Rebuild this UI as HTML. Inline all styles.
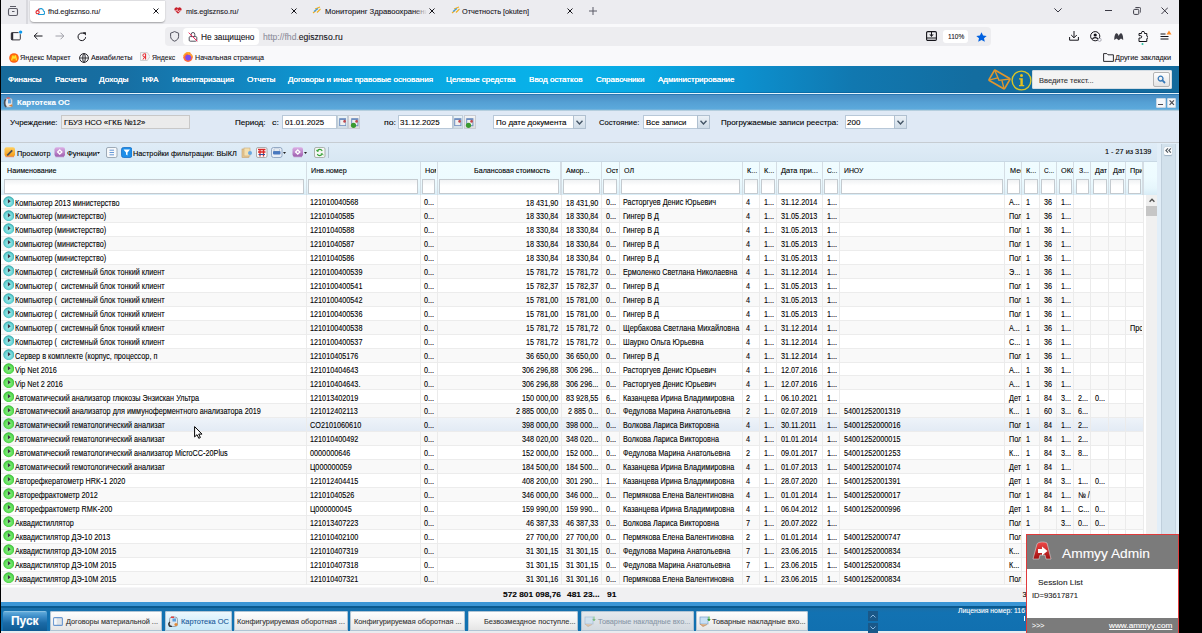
<!DOCTYPE html><html><head><meta charset="utf-8"><style>
*{box-sizing:border-box}
html,body{margin:0;padding:0}
body{width:1202px;height:633px;overflow:hidden;position:relative;background:#fff;font-family:"Liberation Sans", sans-serif;color:#000}
.a{position:absolute}
.t{position:absolute;white-space:nowrap;line-height:1}
.t{-webkit-text-stroke:0.1px currentColor}

</style></head><body>
<div class="a" style="left:0px;top:0px;width:1202px;height:24px;background:#ececf0"></div>
<div class="a" style="left:0px;top:24px;width:1202px;height:42px;background:#f9f9fb"></div>
<div class="a" style="left:29.7px;top:0.5px;width:135.5px;height:21px;background:#fff;border-radius:0 0 4px 4px;box-shadow:0 0.5px 1.5px rgba(0,0,0,.3)"></div>
<div class="a" style="left:26px;top:0px;width:1.5px;height:24px;background:#d9d9de"></div>
<svg class="a" style="left:7px;top:5px" width="12" height="12" viewBox="0 0 12 12"><path d="M3 1.5H9" stroke="#5b5b66" stroke-width="1"/><rect x="1.5" y="3.5" width="9" height="7" rx="1.5" stroke="#5b5b66" stroke-width="1.1" fill="none"/><rect x="5" y="6" width="2.5" height="1" fill="#5b5b66"/></svg>
<svg class="a" style="left:34.5px;top:6.5px" width="10" height="8" viewBox="0 0 10 8"><path d="M3 7.5H8.2A1.8 1.8 0 0 0 8.5 4A2.6 2.6 0 0 0 3.6 3" stroke="#1a9ad6" stroke-width="1.1" fill="none"/><circle cx="2.6" cy="5.2" r="1.6" stroke="#e0242a" stroke-width="1.1" fill="none"/><path d="M2.6 3.6L4 1.5" stroke="#e0242a" stroke-width="1"/></svg>
<svg class="a" style="left:174px;top:6.5px" width="8" height="7" viewBox="0 0 8 7"><path d="M4 6.8L0.8 3.5A1.8 1.8 0 0 1 4 1.3A1.8 1.8 0 0 1 7.2 3.5Z" fill="#c8202c"/><path d="M1 3.8H2.6L3.3 2.5L4.3 5L5 3.8H7" stroke="#fff" stroke-width=".6" fill="none"/></svg>
<svg class="a" style="left:311.5px;top:6px" width="9" height="8" viewBox="0 0 9 8"><path d="M1 7L4 4.5M3 3L8 1M5 6.5L8.5 3" stroke="#f0b020" stroke-width="1.1"/><path d="M2 5.5L6 2.5" stroke="#3a9ae0" stroke-width="1.1"/></svg>
<svg class="a" style="left:450.5px;top:6px" width="9" height="8" viewBox="0 0 9 8"><path d="M1 7L4 4.5M3 3L8 1M5 6.5L8.5 3" stroke="#f0b020" stroke-width="1.1"/><path d="M2 5.5L6 2.5" stroke="#3a9ae0" stroke-width="1.1"/></svg>
<div class="t" style="left:47.90px;top:7.50px;font-size:8px;color:#15141a;transform:scaleX(0.9261);transform-origin:0 0;">fhd.egisznso.ru/</div>
<div class="t" style="left:186.20px;top:7.50px;font-size:8px;color:#15141a;transform:scaleX(0.9067);transform-origin:0 0;">mis.egisznso.ru/</div>
<div class="a" style="left:324.5px;top:0;width:102px;height:22px;overflow:hidden">
<div class="t" style="left:0.00px;top:7.50px;font-size:8px;color:#15141a;transform:scaleX(0.9563);transform-origin:0 0;">Мониторинг Здравоохранения</div>
</div>
<div class="a" style="left:414px;top:3px;width:13px;height:16px;background:linear-gradient(90deg,rgba(236,236,240,0),#ececf0)"></div>
<div class="t" style="left:462.00px;top:7.50px;font-size:8px;color:#15141a;transform:scaleX(0.9143);transform-origin:0 0;">Отчетность [okuten]</div>
<svg class="a" style="left:152.5px;top:8px" width="6" height="6" viewBox="0 0 6 6"><path d="M0.5 0.5L5.5 5.5M5.5 0.5L0.5 5.5" stroke="#15141a" stroke-width="1"/></svg>
<svg class="a" style="left:290.5px;top:8px" width="6" height="6" viewBox="0 0 6 6"><path d="M0.5 0.5L5.5 5.5M5.5 0.5L0.5 5.5" stroke="#15141a" stroke-width="1"/></svg>
<svg class="a" style="left:428.5px;top:8px" width="6" height="6" viewBox="0 0 6 6"><path d="M0.5 0.5L5.5 5.5M5.5 0.5L0.5 5.5" stroke="#15141a" stroke-width="1"/></svg>
<svg class="a" style="left:566.7px;top:8px" width="6" height="6" viewBox="0 0 6 6"><path d="M0.5 0.5L5.5 5.5M5.5 0.5L0.5 5.5" stroke="#15141a" stroke-width="1"/></svg>
<svg class="a" style="left:589px;top:7px" width="8" height="8" viewBox="0 0 8 8"><path d="M4 0V8M0 4H8" stroke="#5b5b66" stroke-width="1"/></svg>
<svg class="a" style="left:1053.5px;top:8px" width="8" height="4.5" viewBox="0 0 8 4.5"><path d="M0.4 0.4L4 4L7.6 0.4" stroke="#3a3944" stroke-width="1" fill="none"/></svg>
<div class="a" style="left:1104.6px;top:10px;width:7px;height:1px;background:#3a3944"></div>
<svg class="a" style="left:1132.6px;top:6.6px" width="8.5" height="8" viewBox="0 0 8.5 8"><rect x="0.6" y="2.4" width="5.2" height="5" rx="1" stroke="#3a3944" stroke-width="1" fill="none"/><path d="M2.4 0.6H6.6A1.2 1.2 0 0 1 7.8 1.8V5.6" stroke="#3a3944" stroke-width="1" fill="none"/></svg>
<svg class="a" style="left:1160.8px;top:6.8px" width="7.5" height="7.5" viewBox="0 0 7.5 7.5"><path d="M0.5 0.5L7 7M7 0.5L0.5 7" stroke="#3a3944" stroke-width="1"/></svg>
<svg class="a" style="left:10px;top:30px" width="13" height="11" viewBox="0 0 13 11"><rect x="1.3" y="2.6" width="9" height="7.3" rx="1" stroke="#2b2a33" stroke-width=".95" fill="none"/><rect x="1.3" y="2.6" width="1.9" height="7.3" fill="#2b2a33"/><circle cx="10.6" cy="2.1" r="2.2" fill="#f9f9fb"/><circle cx="10.6" cy="2.1" r="1.7" fill="#0a9af0"/></svg>
<svg class="a" style="left:33px;top:32px" width="10" height="8" viewBox="0 0 10 8"><path d="M9.5 4H1.2M4.5 0.7L1.2 4L4.5 7.3" stroke="#15141a" stroke-width="1" fill="none"/></svg>
<svg class="a" style="left:55px;top:32px" width="10" height="8" viewBox="0 0 10 8"><path d="M0.5 4H8.8M5.5 0.7L8.8 4L5.5 7.3" stroke="#a0a0a8" stroke-width="1" fill="none"/></svg>
<svg class="a" style="left:77px;top:31.5px" width="10" height="10" viewBox="0 0 10 10"><path d="M8.6 5.2A3.8 3.8 0 1 1 6.8 1.6" stroke="#15141a" stroke-width="1" fill="none"/><path d="M5.6 0.3H8.9V3.6Z" fill="#15141a"/></svg>
<div class="a" style="left:165.2px;top:26.7px;width:825.4px;height:19px;background:#ededf0;border-radius:4px"></div>
<svg class="a" style="left:169.5px;top:30.5px" width="10" height="11" viewBox="0 0 10 11"><path d="M4.6 0.6L8.6 2.2V5.4C8.6 7.8 6.8 9.4 4.6 10.2C2.4 9.4 0.6 7.8 0.6 5.4V2.2Z" stroke="#4a4a55" stroke-width=".95" fill="none" stroke-linejoin="round"/></svg>
<div class="a" style="left:183.3px;top:28px;width:75.4px;height:17px;background:#fff;border-radius:4px"></div>
<svg class="a" style="left:188px;top:30.5px" width="10" height="11" viewBox="0 0 10 11"><path d="M3.2 5.6V3.3A1.8 1.8 0 0 1 6.8 3.3V5.6" stroke="#4a4a55" stroke-width=".95" fill="none"/><rect x="1.2" y="5.6" width="7.6" height="4.6" rx="1" stroke="#4a4a55" stroke-width=".95" fill="none"/><path d="M0.7 1.6L9.3 10.3" stroke="#f0245a" stroke-width="1"/></svg>
<div class="t" style="left:200.50px;top:32.65px;font-size:8.3px;color:#15141a;transform:scaleX(1.0028);transform-origin:0 0;">Не защищено</div>
<div class="t" style="left:263.3px;top:32.77px;font-size:8.3px;color:#8f8f9d;transform:scaleX(1.0345);transform-origin:0 0">http://fhd.<span style="color:#15141a">egisznso.ru</span></div>
<svg class="a" style="left:926px;top:31px" width="11" height="10" viewBox="0 0 11 10"><rect x="0.6" y="0.6" width="9.8" height="8.8" rx="1.2" stroke="#15141a" stroke-width="1.1" fill="none"/><path d="M5.5 0V5.5" stroke="#15141a" stroke-width="1"/><path d="M3.2 3.6H7.8L5.5 5.8Z" fill="#15141a"/><path d="M0.6 7H10.4" stroke="#15141a" stroke-width="1"/></svg>
<div class="a" style="left:943px;top:30px;width:25.3px;height:13px;background:#fff;border-radius:3px"></div>
<div class="t" style="left:948.00px;top:33.30px;font-size:7.8px;color:#15141a;transform:scaleX(0.8364);transform-origin:0 0;">110%</div>
<svg class="a" style="left:975.5px;top:31.5px" width="11" height="10" viewBox="0 0 11 10"><path d="M5.5 0.2L7.1 3.5L10.7 3.9L8 6.3L8.8 9.8L5.5 8L2.2 9.8L3 6.3L0.3 3.9L3.9 3.5Z" fill="#0061e0"/></svg>
<svg class="a" style="left:1068.5px;top:31px" width="10" height="10" viewBox="0 0 10 10"><path d="M5 0V6.5M2.2 4L5 6.8L7.8 4M0.6 6V9.2H9.4V6" stroke="#15141a" stroke-width="1" fill="none"/></svg>
<svg class="a" style="left:1090px;top:31px" width="12" height="11" viewBox="0 0 12 11"><circle cx="5.2" cy="5.2" r="4.6" stroke="#15141a" stroke-width="1" fill="none"/><circle cx="5.2" cy="4" r="1.6" fill="#15141a"/><path d="M2.6 8C3.2 6.2 7.2 6.2 7.8 8" stroke="#15141a" stroke-width="1.3" fill="none"/><circle cx="9.6" cy="8.8" r="1.6" fill="#f9f9fb" stroke="#8f8f9d" stroke-width=".7"/></svg>
<svg class="a" style="left:1114px;top:33px" width="9.5" height="7.5" viewBox="0 0 9.5 7.5"><path d="M0.3 7C0.3 2 1.5 0.3 2.8 0.3C3.8 0.3 4.75 3 4.75 3C4.75 3 5.7 0.3 6.7 0.3C8 0.3 9.2 2 9.2 7L7 5.6L4.75 7.3L2.5 5.6Z" fill="#3d3d45"/></svg>
<svg class="a" style="left:1137.5px;top:30.5px" width="10" height="14" viewBox="0 0 10 14"><path d="M1 10.5V7H2.5A1.2 1.2 0 0 0 2.5 4.6H1V2.5H3.5V1.8A1.5 1.5 0 0 1 6.5 1.8V2.5H8.8V5.2A1.2 1.2 0 0 1 8.8 7.6V10.5Z" stroke="#15141a" stroke-width="1" fill="none"/><circle cx="4.5" cy="13" r="1" fill="#2ac3a2"/></svg>
<svg class="a" style="left:1159.5px;top:29.5px" width="12" height="11" viewBox="0 0 12 11"><path d="M0.5 4H5.5M0.5 6.5H8.5M0.5 9H8.5" stroke="#15141a" stroke-width="1" fill="none"/><path d="M6.5 4.5L9 0.5L11.5 4.5Z" fill="#ff8a24"/></svg>
<svg class="a" style="left:9px;top:52.5px" width="10" height="10" viewBox="0 0 10 10"><circle cx="5" cy="5" r="4.8" fill="#ff5a10"/><circle cx="5" cy="5" r="3.5" fill="#ffa000" opacity=".6"/><path d="M2.6 7.4L4 3L5 5.5L6.3 2.8L7.6 7.4" stroke="#ffe030" stroke-width="1.3" fill="none" stroke-linejoin="round"/></svg>
<div class="t" style="left:20.40px;top:53.50px;font-size:8px;color:#15141a;transform:scaleX(0.9002);transform-origin:0 0;">Яндекс Маркет</div>
<svg class="a" style="left:79px;top:52.5px" width="10" height="10" viewBox="0 0 10 10"><circle cx="5" cy="5" r="4.4" stroke="#15141a" stroke-width=".9" fill="none"/><path d="M0.6 5H9.4M5 0.6V9.4M5 0.6C2.8 2.5 2.8 7.5 5 9.4M5 0.6C7.2 2.5 7.2 7.5 5 9.4" stroke="#15141a" stroke-width=".7" fill="none"/></svg>
<div class="t" style="left:90.80px;top:53.50px;font-size:8px;color:#15141a;transform:scaleX(0.9035);transform-origin:0 0;">Авиабилеты</div>
<svg class="a" style="left:139.5px;top:52px" width="10.5" height="9" viewBox="0 0 10.5 9"><path d="M0.5 0.5H7.3L10 4.5L7.3 8.5H0.5Z" fill="#f4f4f4" stroke="#c8c8c8" stroke-width=".8"/><path d="M5.6 1.8V7.5M5.6 1.8H4.4A1.5 1.5 0 0 0 4.4 4.8H5.6M4.8 4.8L3 7.5" stroke="#e8262c" stroke-width="1" fill="none"/></svg>
<div class="t" style="left:151.80px;top:53.50px;font-size:8px;color:#15141a;transform:scaleX(0.8624);transform-origin:0 0;">Яндекс</div>
<svg class="a" style="left:182.5px;top:52px" width="10" height="10" viewBox="0 0 10 10"><circle cx="5" cy="5.2" r="4.7" fill="#ff6a3a"/><circle cx="5.2" cy="5.6" r="2.9" fill="#7a4df0"/><path d="M0.8 4C1.5 1.5 4 0.3 6 0.6C5 1.2 5.2 2 6.2 2.2C8 2.5 9 3.6 9.6 5" stroke="#ffb030" stroke-width="1.3" fill="none"/></svg>
<div class="t" style="left:195.20px;top:53.50px;font-size:8px;color:#15141a;transform:scaleX(0.8915);transform-origin:0 0;">Начальная страница</div>
<svg class="a" style="left:1102.5px;top:52.5px" width="11" height="9" viewBox="0 0 11 9"><path d="M0.6 0.6H3.8L5 1.8H10.4V8.4H0.6Z" stroke="#15141a" stroke-width=".9" fill="none" stroke-linejoin="round"/></svg>
<div class="t" style="left:1115.00px;top:53.50px;font-size:8px;color:#15141a;transform:scaleX(0.9137);transform-origin:0 0;">Другие закладки</div>
<div class="a" style="left:0px;top:66px;width:1202px;height:26.8px;background:linear-gradient(90deg,#176a9a 0%,#176ea2 10%,#1286c0 20%,#0aa0dc 30%,#08aee6 40%,#08b2ea 47%,#09a8e2 54%,#0c90ce 62%,#1178b0 71%,#136da0 81%,#136a9c 100%)"></div>
<div class="a" style="left:0px;top:91.8px;width:1202px;height:1px;background:rgba(0,70,130,.35)"></div>
<div class="a" style="left:0px;top:92.6px;width:1202px;height:1.4px;background:#e4f4fc"></div>
<div class="t" style="left:8.00px;top:76.00px;font-size:8px;color:#fff;transform:scaleX(1.0004);transform-origin:0 0;text-shadow:0 0 0.3px #fff">Финансы</div>
<div class="t" style="left:55.00px;top:76.00px;font-size:8px;color:#fff;transform:scaleX(1.0098);transform-origin:0 0;text-shadow:0 0 0.3px #fff">Расчеты</div>
<div class="t" style="left:99.00px;top:76.00px;font-size:8px;color:#fff;transform:scaleX(1.0363);transform-origin:0 0;text-shadow:0 0 0.3px #fff">Доходы</div>
<div class="t" style="left:142.00px;top:76.00px;font-size:8px;color:#fff;transform:scaleX(0.9694);transform-origin:0 0;text-shadow:0 0 0.3px #fff">НФА</div>
<div class="t" style="left:172.00px;top:76.00px;font-size:8px;color:#fff;transform:scaleX(1.0059);transform-origin:0 0;text-shadow:0 0 0.3px #fff">Инвентаризация</div>
<div class="t" style="left:247.00px;top:76.00px;font-size:8px;color:#fff;transform:scaleX(1.0307);transform-origin:0 0;text-shadow:0 0 0.3px #fff">Отчеты</div>
<div class="t" style="left:288.00px;top:76.00px;font-size:8px;color:#fff;transform:scaleX(1.0082);transform-origin:0 0;text-shadow:0 0 0.3px #fff">Договоры и иные правовые основания</div>
<div class="t" style="left:446.00px;top:76.00px;font-size:8px;color:#fff;transform:scaleX(0.9993);transform-origin:0 0;text-shadow:0 0 0.3px #fff">Целевые средства</div>
<div class="t" style="left:529.00px;top:76.00px;font-size:8px;color:#fff;transform:scaleX(1.0112);transform-origin:0 0;text-shadow:0 0 0.3px #fff">Ввод остатков</div>
<div class="t" style="left:596.00px;top:76.00px;font-size:8px;color:#fff;transform:scaleX(1.0008);transform-origin:0 0;text-shadow:0 0 0.3px #fff">Справочники</div>
<div class="t" style="left:658.00px;top:76.00px;font-size:8px;color:#fff;transform:scaleX(1.0029);transform-origin:0 0;text-shadow:0 0 0.3px #fff">Администрирование</div>
<svg class="a" style="left:987px;top:69px" width="25" height="21" viewBox="0 0 25 21"><g transform="rotate(30 12.5 10.5)"><rect x="3.5" y="4.5" width="18" height="12" rx="1.2" stroke="#e0962e" stroke-width="1.7" fill="none"/><path d="M3.5 4.8L12.5 11.5L21.5 4.8M3.8 16.3L10 10M21.2 16.3L15 10" stroke="#e0962e" stroke-width="1.4" fill="none"/></g></svg>
<svg class="a" style="left:1010.5px;top:69.5px" width="21" height="21" viewBox="0 0 21 21"><circle cx="10.5" cy="10.5" r="9.4" stroke="#d8c428" stroke-width="1.4" fill="none"/><circle cx="10.5" cy="5.6" r="1.5" fill="#e6c21e"/><path d="M8 8.3H11.8V15H13.2V16.2H8V15H9.4V9.5H8Z" fill="#e6c21e"/></svg>
<div class="a" style="left:1031.8px;top:70px;width:140px;height:19.3px;background:#f3f3f3;border-radius:2px;box-shadow:inset 0 0 0 1px #d4dde4"></div>
<div class="t" style="left:1039.00px;top:76.50px;font-size:8px;color:#333;transform:scaleX(0.9380);transform-origin:0 0;">Введите текст...</div>
<div class="a" style="left:1153px;top:72px;width:17px;height:15px;background:linear-gradient(#fdfdfd,#e4e4e4);border:1px solid #b4b4b4;border-radius:2px"></div>
<svg class="a" style="left:1157px;top:75px" width="9" height="9" viewBox="0 0 9 9"><circle cx="3.6" cy="3.6" r="2.4" stroke="#3779b8" stroke-width="1.3" fill="none"/><path d="M5.2 5.2L8 8" stroke="#3779b8" stroke-width="1.8"/></svg>
<div class="a" style="left:1px;top:94px;width:1178px;height:16.5px;background:linear-gradient(#2a78b4 0px,#2a78b4 1px,#4a8ec4 1.2px,#55a0d4 50%,#5caadc 90%,#a8c8dc 94%,#c0d4e0 100%)"></div>
<svg class="a" style="left:3px;top:96.8px" width="11" height="11.5" viewBox="0 0 11 11.5"><rect x="1.8" y="1.2" width="7.6" height="9" rx="2.2" fill="#e6eaee" stroke="#8a96a0" stroke-width=".6"/><path d="M3 2.2C1 3.8 1 8 3.3 9.8" stroke="#4a525a" stroke-width="1.7" fill="none"/><rect x="5" y="2.2" width="3.2" height="4.2" fill="#62a8e4"/><path d="M5.5 8.8L9.6 9.8L9 7.2Z" fill="#d8843a"/><rect x="3.8" y="0.4" width="3" height="1.3" fill="#e05a5a"/></svg>
<div class="t" style="left:16.50px;top:99.10px;font-size:7.8px;color:#fff;font-weight:bold;transform:scaleX(1.0075);transform-origin:0 0;">Картотека ОС</div>
<div class="a" style="left:1156px;top:98px;width:9.5px;height:9.6px;background:#f4f7fa;border-radius:2px;box-shadow:inset 0 0 0 1px #c8d6e3"></div>
<div class="a" style="left:1158.3px;top:103.5px;width:4.6px;height:1.5px;background:#4a4a52"></div>
<div class="a" style="left:1166.8px;top:98px;width:9.5px;height:9.6px;background:#f4f7fa;border-radius:2px;box-shadow:inset 0 0 0 1px #c8d6e3"></div>
<svg class="a" style="left:1167.6px;top:99px" width="7.5" height="7.5" viewBox="0 0 7.5 7.5"><path d="M1.6 1.4L6 5.8M6 1.4L1.6 5.8" stroke="#4a4a52" stroke-width="1.2"/></svg>
<div class="a" style="left:1px;top:110.5px;width:1178px;height:31.5px;background:#dfe9f5"></div>
<div class="a" style="left:1px;top:141.9px;width:1178px;height:1.5px;background:#c6ccd2"></div>
<div class="t" style="left:10.30px;top:119.00px;font-size:7.6px;color:#000;transform:scaleX(1.0421);transform-origin:0 0;">Учреждение:</div>
<div class="a" style="left:61px;top:115.4px;width:129px;height:14px;background:#ebebeb;box-shadow:inset 0 0 0 1px #c8c8c8"></div>
<div class="t" style="left:64.00px;top:119.45px;font-size:8.1px;color:#000;transform:scaleX(0.9568);transform-origin:0 0;">ГБУЗ НСО «ГКБ №12»</div>
<div class="t" style="left:235.00px;top:119.00px;font-size:7.6px;color:#000;transform:scaleX(1.0603);transform-origin:0 0;">Период:</div>
<div class="t" style="left:272.00px;top:119.00px;font-size:7.6px;color:#000;transform:scaleX(1.1842);transform-origin:0 0;">с:</div>
<div class="a" style="left:282.4px;top:115.4px;width:55px;height:14px;background:#fff;box-shadow:inset 0 0 0 1px #b8c8d8"></div>
<div class="t" style="left:284.90px;top:119.45px;font-size:8.1px;color:#000;transform:scaleX(0.9646);transform-origin:0 0;">01.01.2025</div>
<div class="t" style="left:384.00px;top:119.00px;font-size:7.6px;color:#000;transform:scaleX(1.1479);transform-origin:0 0;">по:</div>
<div class="a" style="left:397.8px;top:115.4px;width:55px;height:14px;background:#fff;box-shadow:inset 0 0 0 1px #b8c8d8"></div>
<div class="t" style="left:400.30px;top:119.45px;font-size:8.1px;color:#000;transform:scaleX(0.9794);transform-origin:0 0;">31.12.2025</div>
<div class="a" style="left:337.3px;top:115.4px;width:10.3px;height:14px;background:linear-gradient(#eef6fa,#cfdbe4);box-shadow:inset 0 0 0 1px #c2ced8"></div>
<svg class="a" style="left:338.90000000000003px;top:117.6px" width="7.5" height="8.5" viewBox="0 0 7.5 8.5"><rect x="0.7" y="0.7" width="6.2" height="7" fill="#f0f0f0" stroke="#6f8fc0" stroke-width="1"/><rect x="0.7" y="0.7" width="6.2" height="1.3" fill="#6f8fc0"/><ellipse cx="5.6" cy="3.2" rx="1.3" ry="1.5" fill="#c04a50"/></svg>
<div class="a" style="left:348.3px;top:115.4px;width:12px;height:14px;background:linear-gradient(#f6f6f6,#dcdcdc);box-shadow:inset 0 0 0 1px #c8ccd4"></div>
<svg class="a" style="left:349.8px;top:117.6px" width="9" height="10" viewBox="0 0 9 10"><rect x="1.7" y="0.7" width="6.2" height="7" fill="#f0f0f0" stroke="#6f8fc0" stroke-width="1"/><rect x="1.7" y="0.7" width="6.2" height="1.3" fill="#6f8fc0"/><ellipse cx="6.6" cy="3.2" rx="1.3" ry="1.5" fill="#c04a50"/><circle cx="3.5" cy="7.3" r="2.6" fill="#3a9a30"/></svg>
<div class="a" style="left:452.8px;top:115.4px;width:10.3px;height:14px;background:linear-gradient(#eef6fa,#cfdbe4);box-shadow:inset 0 0 0 1px #c2ced8"></div>
<svg class="a" style="left:454.40000000000003px;top:117.6px" width="7.5" height="8.5" viewBox="0 0 7.5 8.5"><rect x="0.7" y="0.7" width="6.2" height="7" fill="#f0f0f0" stroke="#6f8fc0" stroke-width="1"/><rect x="0.7" y="0.7" width="6.2" height="1.3" fill="#6f8fc0"/><ellipse cx="5.6" cy="3.2" rx="1.3" ry="1.5" fill="#c04a50"/></svg>
<div class="a" style="left:463.8px;top:115.4px;width:12px;height:14px;background:linear-gradient(#f6f6f6,#dcdcdc);box-shadow:inset 0 0 0 1px #c8ccd4"></div>
<svg class="a" style="left:465.3px;top:117.6px" width="9" height="10" viewBox="0 0 9 10"><rect x="1.7" y="0.7" width="6.2" height="7" fill="#f0f0f0" stroke="#6f8fc0" stroke-width="1"/><rect x="1.7" y="0.7" width="6.2" height="1.3" fill="#6f8fc0"/><ellipse cx="6.6" cy="3.2" rx="1.3" ry="1.5" fill="#c04a50"/><circle cx="3.5" cy="7.3" r="2.6" fill="#3a9a30"/></svg>
<div class="a" style="left:493px;top:115.4px;width:93px;height:14px;background:#fff;box-shadow:inset 0 0 0 1px #b8c8d8"></div>
<div class="t" style="left:495.60px;top:119.45px;font-size:8.1px;color:#000;transform:scaleX(0.9861);transform-origin:0 0;">По дате документа</div>
<div class="a" style="left:573px;top:115.4px;width:13px;height:14px;background:linear-gradient(#eef3f8,#cddae6);box-shadow:inset 0 0 0 1px #b0c0d0"></div>
<svg class="a" style="left:576px;top:119.8px" width="7" height="5" viewBox="0 0 7 5"><path d="M0.5 0.8L3.5 4L6.5 0.8" stroke="#445566" stroke-width="1.4" fill="none"/></svg>
<div class="t" style="left:599.20px;top:119.00px;font-size:7.6px;color:#000;transform:scaleX(1.0067);transform-origin:0 0;">Состояние:</div>
<div class="a" style="left:643.4px;top:115.4px;width:67px;height:14px;background:#fff;box-shadow:inset 0 0 0 1px #b8c8d8"></div>
<div class="t" style="left:646.00px;top:119.45px;font-size:8.1px;color:#000;transform:scaleX(0.9663);transform-origin:0 0;">Все записи</div>
<div class="a" style="left:697.4px;top:115.4px;width:13px;height:14px;background:linear-gradient(#eef3f8,#cddae6);box-shadow:inset 0 0 0 1px #b0c0d0"></div>
<svg class="a" style="left:700.4px;top:119.8px" width="7" height="5" viewBox="0 0 7 5"><path d="M0.5 0.8L3.5 4L6.5 0.8" stroke="#445566" stroke-width="1.4" fill="none"/></svg>
<div class="t" style="left:720.50px;top:119.00px;font-size:7.6px;color:#000;transform:scaleX(1.0489);transform-origin:0 0;">Прогружаемые записи реестра:</div>
<div class="a" style="left:844.5px;top:115.4px;width:62px;height:14px;background:#fff;box-shadow:inset 0 0 0 1px #b8c8d8"></div>
<div class="t" style="left:847.10px;top:119.45px;font-size:8.1px;color:#000;transform:scaleX(0.9916);transform-origin:0 0;">200</div>
<div class="a" style="left:893.5px;top:115.4px;width:13px;height:14px;background:linear-gradient(#eef3f8,#cddae6);box-shadow:inset 0 0 0 1px #b0c0d0"></div>
<svg class="a" style="left:896.5px;top:119.8px" width="7" height="5" viewBox="0 0 7 5"><path d="M0.5 0.8L3.5 4L6.5 0.8" stroke="#445566" stroke-width="1.4" fill="none"/></svg>
<div class="a" style="left:1px;top:143.4px;width:1156px;height:17.9px;background:linear-gradient(#dfecf7,#d8e7f3)"></div>
<div class="a" style="left:1157.3px;top:143.4px;width:21.7px;height:490px;background:#e2eef8"></div>
<div class="a" style="left:1161.2px;top:143.6px;width:15.1px;height:490px;background:#d2e1ec;box-shadow:inset 1px 0 0 #c0cfdc, inset -1px 0 0 #c6d5e1"></div>
<div class="a" style="left:1163.8px;top:146.7px;width:8.4px;height:8.5px;background:#fbfcfd;border-radius:1.5px;box-shadow:0 0.5px 1px rgba(60,90,120,.35)"></div>
<svg class="a" style="left:1165px;top:148.4px" width="6.5" height="5" viewBox="0 0 6.5 5"><path d="M3 0.4L0.9 2.5L3 4.6M5.9 0.4L3.8 2.5L5.9 4.6" stroke="#505860" stroke-width="1.1" fill="none"/></svg>
<div class="t" style="left:1105.30px;top:147.95px;font-size:7.3px;color:#000;transform:scaleX(0.9982);transform-origin:0 0;">1 - 27 из 3139</div>
<svg class="a" style="left:4.4px;top:147px" width="11.5" height="11" viewBox="0 0 11.5 11"><defs><linearGradient id="to" x1="0" y1="0" x2="0" y2="1"><stop offset="0" stop-color="#ffd060"/><stop offset="1" stop-color="#f59a18"/></linearGradient></defs><rect x="0.5" y="0.3" width="10.5" height="9.2" rx="2" fill="url(#to)"/><path d="M1.5 9.6H10" stroke="#e8905a" stroke-width="1.2"/><path d="M3.2 7.2L7.6 2.8L8.8 4L4.4 8.4L2.9 8.7Z" fill="#4a4a52"/></svg>
<div class="t" style="left:17.00px;top:149.70px;font-size:8px;color:#000;transform:scaleX(0.9170);transform-origin:0 0;">Просмотр</div>
<svg class="a" style="left:54.3px;top:147px" width="11.5" height="11" viewBox="0 0 11.5 11"><defs><linearGradient id="tp" x1="0" y1="0" x2="0" y2="1"><stop offset="0" stop-color="#dcb0e6"/><stop offset="1" stop-color="#a060b0"/></linearGradient></defs><rect x="0.5" y="0.3" width="10.5" height="9.2" rx="2" fill="url(#tp)"/><path d="M1.5 9.6H10" stroke="#b080c0" stroke-width="1.2"/><path d="M5.75 2L8.8 5L5.75 8L2.7 5Z" fill="#fff"/><circle cx="5.75" cy="5" r="1" fill="#c090d0"/></svg>
<div class="t" style="left:66.50px;top:149.70px;font-size:8px;color:#000;transform:scaleX(0.9518);transform-origin:0 0;">Функции</div>
<svg class="a" style="left:97.3px;top:151.7px" width="3" height="2" viewBox="0 0 3 2"><path d="M0 0H3L1.5 2Z" fill="#222"/></svg>
<svg class="a" style="left:106px;top:147px" width="11.5" height="11" viewBox="0 0 11.5 11"><rect x="0.5" y="0.5" width="10.5" height="10" rx="1.5" fill="#f6f8fa" stroke="#8a98a6" stroke-width=".8"/><path d="M3.5 3.2H8M3.5 5.5H8M3.5 7.8H8" stroke="#2a70c8" stroke-width=".7"/></svg>
<svg class="a" style="left:120.8px;top:147px" width="11.5" height="11" viewBox="0 0 11.5 11"><rect x="0.5" y="0.5" width="10.5" height="10" rx="2" fill="#1e8ee8" stroke="#1670c8" stroke-width=".8"/><path d="M2.5 2.5H9L6.5 5.5V8.5L5 7.5V5.5Z" fill="#fff"/></svg>
<div class="t" style="left:133.30px;top:149.70px;font-size:8px;color:#000;transform:scaleX(0.9140);transform-origin:0 0;">Настройки фильтрации: ВЫКЛ</div>
<svg class="a" style="left:241.2px;top:147px" width="11.5" height="11" viewBox="0 0 11.5 11"><rect x="1" y="2" width="7" height="8.5" fill="#e8c890" stroke="#c0a070" stroke-width=".6"/><rect x="3" y="1" width="6" height="8" fill="#f4e0b0" stroke="#c8a878" stroke-width=".6"/><circle cx="9" cy="6" r="2" fill="#6aa8e0"/></svg>
<svg class="a" style="left:256.2px;top:147px" width="11.5" height="11" viewBox="0 0 11.5 11"><rect x="0.5" y="0.5" width="10.5" height="10" rx="1.5" fill="#fafafa" stroke="#9a9a9a" stroke-width=".8"/><path d="M2 2.5H9.5M2 5H9.5M4 2V9.5M7.5 2V9.5" stroke="#d82828" stroke-width="1.3"/><path d="M2.5 7.5H9" stroke="#3050a0" stroke-width="1"/></svg>
<svg class="a" style="left:271.2px;top:147px" width="11.5" height="11" viewBox="0 0 11.5 11"><rect x="0.5" y="0.5" width="10.5" height="10" rx="2" fill="#e8eef6" stroke="#8098b8" stroke-width=".8"/><rect x="2" y="4" width="7.5" height="3.5" rx="1" fill="#4878c0"/><rect x="3" y="2" width="5.5" height="2" fill="#fff" stroke="#7890b0" stroke-width=".4"/></svg>
<svg class="a" style="left:283.3px;top:151.7px" width="3" height="2" viewBox="0 0 3 2"><path d="M0 0H3L1.5 2Z" fill="#222"/></svg>
<svg class="a" style="left:292.4px;top:147px" width="11.5" height="11" viewBox="0 0 11.5 11"><defs><linearGradient id="tp2" x1="0" y1="0" x2="0" y2="1"><stop offset="0" stop-color="#dcb0e6"/><stop offset="1" stop-color="#a060b0"/></linearGradient></defs><rect x="0.5" y="0.3" width="10.5" height="9.2" rx="2" fill="url(#tp2)"/><path d="M1.5 9.6H10" stroke="#b080c0" stroke-width="1.2"/><path d="M5.75 2L8.8 5L5.75 8L2.7 5Z" fill="#fff"/><circle cx="5.75" cy="5" r="1" fill="#c090d0"/></svg>
<svg class="a" style="left:304.4px;top:151.7px" width="3" height="2" viewBox="0 0 3 2"><path d="M0 0H3L1.5 2Z" fill="#222"/></svg>
<svg class="a" style="left:314px;top:147px" width="11.5" height="11" viewBox="0 0 11.5 11"><rect x="0.5" y="0.5" width="10.5" height="10" rx="1.5" fill="#f4f6f4" stroke="#9aa29a" stroke-width=".8"/><path d="M8.2 4A2.6 2.6 0 0 0 3.3 4.2M3.3 7A2.6 2.6 0 0 0 8.2 6.8" stroke="#30a030" stroke-width="1.1" fill="none"/><path d="M2.3 2.8L3.3 4.6L5 3.8M9.2 8.2L8.2 6.4L6.5 7.2" stroke="#30a030" stroke-width=".8" fill="none"/></svg>
<div class="a" style="left:328.4px;top:147px;width:1px;height:11px;background:#b0c0d0"></div>
<div class="a" style="left:1.2px;top:161.3px;width:1156.1px;height:34px;background:linear-gradient(#f0fcff 0%,#edfbff 50%,#e6f6fc 80%,#d8ecf6 100%)"></div>
<div class="a" style="left:1.2px;top:161.3px;width:1156.1px;height:1px;background:#c8d8e4"></div>
<div class="a" style="left:1.5px;top:162px;width:303.8px;height:16px;overflow:hidden">
<div class="t" style="left:5.10px;top:4.85px;font-size:7.9px;color:#000;transform:scaleX(0.9058);transform-origin:0 0;">Наименование</div>
</div>
<div class="a" style="left:4.3px;top:179.1px;width:300.2px;height:14.7px;background:linear-gradient(#eef0f2,#fff 45%);box-shadow:inset 0 0 0 1px #c4cacf, inset 0 1px 0 #a8b0b6"></div>
<div class="a" style="left:305.7px;top:162.3px;width:1.2px;height:33px;background:#d4dde4"></div>
<div class="a" style="left:306.3px;top:162px;width:113.0px;height:16px;overflow:hidden">
<div class="t" style="left:4.70px;top:4.85px;font-size:7.9px;color:#000;transform:scaleX(0.9085);transform-origin:0 0;">Инв.номер</div>
</div>
<div class="a" style="left:308.1px;top:179.1px;width:110.4px;height:14.7px;background:linear-gradient(#eef0f2,#fff 45%);box-shadow:inset 0 0 0 1px #c4cacf, inset 0 1px 0 #a8b0b6"></div>
<div class="a" style="left:419.7px;top:162.3px;width:1.2px;height:33px;background:#d4dde4"></div>
<div class="a" style="left:420.3px;top:162px;width:15.899999999999977px;height:16px;overflow:hidden">
<div class="t" style="left:4.70px;top:4.85px;font-size:7.9px;color:#000;transform:scaleX(0.9200);transform-origin:0 0;">Ном</div>
</div>
<div class="a" style="left:422.1px;top:179.1px;width:13.299999999999978px;height:14.7px;background:linear-gradient(#eef0f2,#fff 45%);box-shadow:inset 0 0 0 1px #c4cacf, inset 0 1px 0 #a8b0b6"></div>
<div class="a" style="left:436.59999999999997px;top:162.3px;width:1.2px;height:33px;background:#d4dde4"></div>
<div class="a" style="left:437.2px;top:162px;width:122.80000000000001px;height:16px;overflow:hidden">
<div class="t" style="left:36.80px;top:4.85px;font-size:7.9px;color:#000;transform:scaleX(0.9032);transform-origin:0 0;">Балансовая стоимость</div>
</div>
<div class="a" style="left:439.0px;top:179.1px;width:120.20000000000002px;height:14.7px;background:linear-gradient(#eef0f2,#fff 45%);box-shadow:inset 0 0 0 1px #c4cacf, inset 0 1px 0 #a8b0b6"></div>
<div class="a" style="left:560.4px;top:162.3px;width:1.2px;height:33px;background:#d4dde4"></div>
<div class="a" style="left:561px;top:162px;width:39.5px;height:16px;overflow:hidden">
<div class="t" style="left:4.70px;top:4.85px;font-size:7.9px;color:#000;transform:scaleX(0.9014);transform-origin:0 0;">Амор...</div>
</div>
<div class="a" style="left:562.8px;top:179.1px;width:36.9px;height:14.7px;background:linear-gradient(#eef0f2,#fff 45%);box-shadow:inset 0 0 0 1px #c4cacf, inset 0 1px 0 #a8b0b6"></div>
<div class="a" style="left:600.9px;top:162.3px;width:1.2px;height:33px;background:#d4dde4"></div>
<div class="a" style="left:601.5px;top:162px;width:16.700000000000045px;height:16px;overflow:hidden">
<div class="t" style="left:4.70px;top:4.85px;font-size:7.9px;color:#000;transform:scaleX(0.9200);transform-origin:0 0;">Ост.</div>
</div>
<div class="a" style="left:603.3px;top:179.1px;width:14.100000000000046px;height:14.7px;background:linear-gradient(#eef0f2,#fff 45%);box-shadow:inset 0 0 0 1px #c4cacf, inset 0 1px 0 #a8b0b6"></div>
<div class="a" style="left:618.6px;top:162.3px;width:1.2px;height:33px;background:#d4dde4"></div>
<div class="a" style="left:619.2px;top:162px;width:122.0px;height:16px;overflow:hidden">
<div class="t" style="left:4.70px;top:4.85px;font-size:7.9px;color:#000;transform:scaleX(0.8897);transform-origin:0 0;">ОЛ</div>
</div>
<div class="a" style="left:621.0px;top:179.1px;width:119.4px;height:14.7px;background:linear-gradient(#eef0f2,#fff 45%);box-shadow:inset 0 0 0 1px #c4cacf, inset 0 1px 0 #a8b0b6"></div>
<div class="a" style="left:741.6px;top:162.3px;width:1.2px;height:33px;background:#d4dde4"></div>
<div class="a" style="left:742.2px;top:162px;width:16.399999999999977px;height:16px;overflow:hidden">
<div class="t" style="left:4.70px;top:4.85px;font-size:7.9px;color:#000;transform:scaleX(0.9119);transform-origin:0 0;">К...</div>
</div>
<div class="a" style="left:744.0px;top:179.1px;width:13.799999999999978px;height:14.7px;background:linear-gradient(#eef0f2,#fff 45%);box-shadow:inset 0 0 0 1px #c4cacf, inset 0 1px 0 #a8b0b6"></div>
<div class="a" style="left:759.0px;top:162.3px;width:1.2px;height:33px;background:#d4dde4"></div>
<div class="a" style="left:759.6px;top:162px;width:15.899999999999977px;height:16px;overflow:hidden">
<div class="t" style="left:4.70px;top:4.85px;font-size:7.9px;color:#000;transform:scaleX(0.9208);transform-origin:0 0;">К...</div>
</div>
<div class="a" style="left:761.4px;top:179.1px;width:13.299999999999978px;height:14.7px;background:linear-gradient(#eef0f2,#fff 45%);box-shadow:inset 0 0 0 1px #c4cacf, inset 0 1px 0 #a8b0b6"></div>
<div class="a" style="left:775.9px;top:162.3px;width:1.2px;height:33px;background:#d4dde4"></div>
<div class="a" style="left:776.5px;top:162px;width:44.89999999999998px;height:16px;overflow:hidden">
<div class="t" style="left:4.70px;top:4.85px;font-size:7.9px;color:#000;transform:scaleX(0.9402);transform-origin:0 0;">Дата при...</div>
</div>
<div class="a" style="left:778.3px;top:179.1px;width:42.299999999999976px;height:14.7px;background:linear-gradient(#eef0f2,#fff 45%);box-shadow:inset 0 0 0 1px #c4cacf, inset 0 1px 0 #a8b0b6"></div>
<div class="a" style="left:821.8px;top:162.3px;width:1.2px;height:33px;background:#d4dde4"></div>
<div class="a" style="left:822.4px;top:162px;width:16.0px;height:16px;overflow:hidden">
<div class="t" style="left:4.70px;top:4.85px;font-size:7.9px;color:#000;transform:scaleX(0.8381);transform-origin:0 0;">С...</div>
</div>
<div class="a" style="left:824.1999999999999px;top:179.1px;width:13.4px;height:14.7px;background:linear-gradient(#eef0f2,#fff 45%);box-shadow:inset 0 0 0 1px #c4cacf, inset 0 1px 0 #a8b0b6"></div>
<div class="a" style="left:838.8px;top:162.3px;width:1.2px;height:33px;background:#d4dde4"></div>
<div class="a" style="left:839.4px;top:162px;width:164.5px;height:16px;overflow:hidden">
<div class="t" style="left:4.70px;top:4.85px;font-size:7.9px;color:#000;transform:scaleX(0.8671);transform-origin:0 0;">ИНОУ</div>
</div>
<div class="a" style="left:841.1999999999999px;top:179.1px;width:161.9px;height:14.7px;background:linear-gradient(#eef0f2,#fff 45%);box-shadow:inset 0 0 0 1px #c4cacf, inset 0 1px 0 #a8b0b6"></div>
<div class="a" style="left:1004.3px;top:162.3px;width:1.2px;height:33px;background:#d4dde4"></div>
<div class="a" style="left:1004.9px;top:162px;width:15.899999999999977px;height:16px;overflow:hidden">
<div class="t" style="left:4.70px;top:4.85px;font-size:7.9px;color:#000;transform:scaleX(0.9200);transform-origin:0 0;">Мес</div>
</div>
<div class="a" style="left:1006.6999999999999px;top:179.1px;width:13.299999999999978px;height:14.7px;background:linear-gradient(#eef0f2,#fff 45%);box-shadow:inset 0 0 0 1px #c4cacf, inset 0 1px 0 #a8b0b6"></div>
<div class="a" style="left:1021.1999999999999px;top:162.3px;width:1.2px;height:33px;background:#d4dde4"></div>
<div class="a" style="left:1021.8px;top:162px;width:16.700000000000045px;height:16px;overflow:hidden">
<div class="t" style="left:4.70px;top:4.85px;font-size:7.9px;color:#000;transform:scaleX(0.9297);transform-origin:0 0;">К...</div>
</div>
<div class="a" style="left:1023.5999999999999px;top:179.1px;width:14.100000000000046px;height:14.7px;background:linear-gradient(#eef0f2,#fff 45%);box-shadow:inset 0 0 0 1px #c4cacf, inset 0 1px 0 #a8b0b6"></div>
<div class="a" style="left:1038.9px;top:162.3px;width:1.2px;height:33px;background:#d4dde4"></div>
<div class="a" style="left:1039.5px;top:162px;width:16.299999999999955px;height:16px;overflow:hidden">
<div class="t" style="left:4.70px;top:4.85px;font-size:7.9px;color:#000;transform:scaleX(0.8218);transform-origin:0 0;">С...</div>
</div>
<div class="a" style="left:1041.3px;top:179.1px;width:13.699999999999955px;height:14.7px;background:linear-gradient(#eef0f2,#fff 45%);box-shadow:inset 0 0 0 1px #c4cacf, inset 0 1px 0 #a8b0b6"></div>
<div class="a" style="left:1056.2px;top:162.3px;width:1.2px;height:33px;background:#d4dde4"></div>
<div class="a" style="left:1056.8px;top:162px;width:16.100000000000136px;height:16px;overflow:hidden">
<div class="t" style="left:4.70px;top:4.85px;font-size:7.9px;color:#000;transform:scaleX(0.9200);transform-origin:0 0;">ОКС</div>
</div>
<div class="a" style="left:1058.6px;top:179.1px;width:13.500000000000137px;height:14.7px;background:linear-gradient(#eef0f2,#fff 45%);box-shadow:inset 0 0 0 1px #c4cacf, inset 0 1px 0 #a8b0b6"></div>
<div class="a" style="left:1073.3000000000002px;top:162.3px;width:1.2px;height:33px;background:#d4dde4"></div>
<div class="a" style="left:1073.9px;top:162px;width:15.799999999999955px;height:16px;overflow:hidden">
<div class="t" style="left:4.70px;top:4.85px;font-size:7.9px;color:#000;transform:scaleX(0.8718);transform-origin:0 0;">З...</div>
</div>
<div class="a" style="left:1075.7px;top:179.1px;width:13.199999999999955px;height:14.7px;background:linear-gradient(#eef0f2,#fff 45%);box-shadow:inset 0 0 0 1px #c4cacf, inset 0 1px 0 #a8b0b6"></div>
<div class="a" style="left:1090.1000000000001px;top:162.3px;width:1.2px;height:33px;background:#d4dde4"></div>
<div class="a" style="left:1090.7px;top:162px;width:16.799999999999955px;height:16px;overflow:hidden">
<div class="t" style="left:4.70px;top:4.85px;font-size:7.9px;color:#000;transform:scaleX(0.9200);transform-origin:0 0;">Дат</div>
</div>
<div class="a" style="left:1092.5px;top:179.1px;width:14.199999999999955px;height:14.7px;background:linear-gradient(#eef0f2,#fff 45%);box-shadow:inset 0 0 0 1px #c4cacf, inset 0 1px 0 #a8b0b6"></div>
<div class="a" style="left:1107.9px;top:162.3px;width:1.2px;height:33px;background:#d4dde4"></div>
<div class="a" style="left:1108.5px;top:162px;width:16.299999999999955px;height:16px;overflow:hidden">
<div class="t" style="left:4.70px;top:4.85px;font-size:7.9px;color:#000;transform:scaleX(0.9200);transform-origin:0 0;">Дат</div>
</div>
<div class="a" style="left:1110.3px;top:179.1px;width:13.699999999999955px;height:14.7px;background:linear-gradient(#eef0f2,#fff 45%);box-shadow:inset 0 0 0 1px #c4cacf, inset 0 1px 0 #a8b0b6"></div>
<div class="a" style="left:1125.2px;top:162.3px;width:1.2px;height:33px;background:#d4dde4"></div>
<div class="a" style="left:1125.8px;top:162px;width:16.200000000000045px;height:16px;overflow:hidden">
<div class="t" style="left:4.70px;top:4.85px;font-size:7.9px;color:#000;transform:scaleX(0.9182);transform-origin:0 0;">При</div>
</div>
<div class="a" style="left:1127.6px;top:179.1px;width:13.600000000000046px;height:14.7px;background:linear-gradient(#eef0f2,#fff 45%);box-shadow:inset 0 0 0 1px #c4cacf, inset 0 1px 0 #a8b0b6"></div>
<div class="a" style="left:1142.4px;top:162.3px;width:1.2px;height:33px;background:#d4dde4"></div>
<div class="a" style="left:1.2px;top:195.4px;width:1142.6px;height:390.03999999999996px;background:#fff"></div>
<div class="a" style="left:1.2px;top:195.4px;width:1142.6px;height:13.93px;background:#fff;box-shadow:inset 0 -1px 0 #ececec"></div>
<div class="a" style="left:1.2px;top:209.33px;width:1142.6px;height:13.93px;background:#f9f9f9;box-shadow:inset 0 -1px 0 #ececec"></div>
<div class="a" style="left:1.2px;top:223.26px;width:1142.6px;height:13.93px;background:#fff;box-shadow:inset 0 -1px 0 #ececec"></div>
<div class="a" style="left:1.2px;top:237.19px;width:1142.6px;height:13.93px;background:#f9f9f9;box-shadow:inset 0 -1px 0 #ececec"></div>
<div class="a" style="left:1.2px;top:251.12px;width:1142.6px;height:13.93px;background:#fff;box-shadow:inset 0 -1px 0 #ececec"></div>
<div class="a" style="left:1.2px;top:265.05px;width:1142.6px;height:13.93px;background:#f9f9f9;box-shadow:inset 0 -1px 0 #ececec"></div>
<div class="a" style="left:1.2px;top:278.98px;width:1142.6px;height:13.93px;background:#fff;box-shadow:inset 0 -1px 0 #ececec"></div>
<div class="a" style="left:1.2px;top:292.90999999999997px;width:1142.6px;height:13.93px;background:#f9f9f9;box-shadow:inset 0 -1px 0 #ececec"></div>
<div class="a" style="left:1.2px;top:306.84000000000003px;width:1142.6px;height:13.93px;background:#fff;box-shadow:inset 0 -1px 0 #ececec"></div>
<div class="a" style="left:1.2px;top:320.77px;width:1142.6px;height:13.93px;background:#f9f9f9;box-shadow:inset 0 -1px 0 #ececec"></div>
<div class="a" style="left:1.2px;top:334.70000000000005px;width:1142.6px;height:13.93px;background:#fff;box-shadow:inset 0 -1px 0 #ececec"></div>
<div class="a" style="left:1.2px;top:348.63px;width:1142.6px;height:13.93px;background:#f9f9f9;box-shadow:inset 0 -1px 0 #ececec"></div>
<div class="a" style="left:1.2px;top:362.56px;width:1142.6px;height:13.93px;background:#fff;box-shadow:inset 0 -1px 0 #ececec"></div>
<div class="a" style="left:1.2px;top:376.49px;width:1142.6px;height:13.93px;background:#f9f9f9;box-shadow:inset 0 -1px 0 #ececec"></div>
<div class="a" style="left:1.2px;top:390.41999999999996px;width:1142.6px;height:13.93px;background:#fff;box-shadow:inset 0 -1px 0 #ececec"></div>
<div class="a" style="left:1.2px;top:404.35px;width:1142.6px;height:13.93px;background:#f9f9f9;box-shadow:inset 0 -1px 0 #ececec"></div>
<div class="a" style="left:1.2px;top:418.28px;width:1142.6px;height:13.93px;background:linear-gradient(#eef3f9,#e2eaf4);box-shadow:inset 0 -1px 0 #ececec"></div>
<div class="a" style="left:1.2px;top:432.21000000000004px;width:1142.6px;height:13.93px;background:#f9f9f9;box-shadow:inset 0 -1px 0 #ececec"></div>
<div class="a" style="left:1.2px;top:446.14px;width:1142.6px;height:13.93px;background:#fff;box-shadow:inset 0 -1px 0 #ececec"></div>
<div class="a" style="left:1.2px;top:460.07000000000005px;width:1142.6px;height:13.93px;background:#f9f9f9;box-shadow:inset 0 -1px 0 #ececec"></div>
<div class="a" style="left:1.2px;top:474.0px;width:1142.6px;height:13.93px;background:#fff;box-shadow:inset 0 -1px 0 #ececec"></div>
<div class="a" style="left:1.2px;top:487.92999999999995px;width:1142.6px;height:13.93px;background:#f9f9f9;box-shadow:inset 0 -1px 0 #ececec"></div>
<div class="a" style="left:1.2px;top:501.86px;width:1142.6px;height:13.93px;background:#fff;box-shadow:inset 0 -1px 0 #ececec"></div>
<div class="a" style="left:1.2px;top:515.79px;width:1142.6px;height:13.93px;background:#f9f9f9;box-shadow:inset 0 -1px 0 #ececec"></div>
<div class="a" style="left:1.2px;top:529.72px;width:1142.6px;height:13.93px;background:#fff;box-shadow:inset 0 -1px 0 #ececec"></div>
<div class="a" style="left:1.2px;top:543.65px;width:1142.6px;height:13.93px;background:#f9f9f9;box-shadow:inset 0 -1px 0 #ececec"></div>
<div class="a" style="left:1.2px;top:557.58px;width:1142.6px;height:13.93px;background:#fff;box-shadow:inset 0 -1px 0 #ececec"></div>
<div class="a" style="left:1.2px;top:571.51px;width:1142.6px;height:13.93px;background:#f9f9f9;box-shadow:inset 0 -1px 0 #ececec"></div>
<div class="a" style="left:305.8px;top:195.4px;width:1px;height:390.03999999999996px;background:#ebebeb"></div>
<div class="a" style="left:419.8px;top:195.4px;width:1px;height:390.03999999999996px;background:#ebebeb"></div>
<div class="a" style="left:436.7px;top:195.4px;width:1px;height:390.03999999999996px;background:#ebebeb"></div>
<div class="a" style="left:560.5px;top:195.4px;width:1px;height:390.03999999999996px;background:#ebebeb"></div>
<div class="a" style="left:601.0px;top:195.4px;width:1px;height:390.03999999999996px;background:#ebebeb"></div>
<div class="a" style="left:618.7px;top:195.4px;width:1px;height:390.03999999999996px;background:#ebebeb"></div>
<div class="a" style="left:741.7px;top:195.4px;width:1px;height:390.03999999999996px;background:#ebebeb"></div>
<div class="a" style="left:759.1px;top:195.4px;width:1px;height:390.03999999999996px;background:#ebebeb"></div>
<div class="a" style="left:776.0px;top:195.4px;width:1px;height:390.03999999999996px;background:#ebebeb"></div>
<div class="a" style="left:821.9px;top:195.4px;width:1px;height:390.03999999999996px;background:#ebebeb"></div>
<div class="a" style="left:838.9px;top:195.4px;width:1px;height:390.03999999999996px;background:#ebebeb"></div>
<div class="a" style="left:1004.4px;top:195.4px;width:1px;height:390.03999999999996px;background:#ebebeb"></div>
<div class="a" style="left:1021.3px;top:195.4px;width:1px;height:390.03999999999996px;background:#ebebeb"></div>
<div class="a" style="left:1039.0px;top:195.4px;width:1px;height:390.03999999999996px;background:#ebebeb"></div>
<div class="a" style="left:1056.3px;top:195.4px;width:1px;height:390.03999999999996px;background:#ebebeb"></div>
<div class="a" style="left:1073.4px;top:195.4px;width:1px;height:390.03999999999996px;background:#ebebeb"></div>
<div class="a" style="left:1090.2px;top:195.4px;width:1px;height:390.03999999999996px;background:#ebebeb"></div>
<div class="a" style="left:1108.0px;top:195.4px;width:1px;height:390.03999999999996px;background:#ebebeb"></div>
<div class="a" style="left:1125.3px;top:195.4px;width:1px;height:390.03999999999996px;background:#ebebeb"></div>
<div class="a" style="left:1142.5px;top:195.4px;width:1px;height:390.03999999999996px;background:#ebebeb"></div>
<svg class="a" style="left:2.7px;top:195.6px" width="11.5" height="11.5" viewBox="0 0 11.5 11.5"><defs><radialGradient id="g0" cx="50%" cy="55%" r="55%"><stop offset="0" stop-color="#b8f4f4"/><stop offset=".7" stop-color="#62d0d2"/><stop offset="1" stop-color="#2e9ca0"/></radialGradient></defs><circle cx="5.75" cy="5.75" r="5.45" fill="url(#g0)"/><path d="M4.9 3.0L7.7 5.2L4.9 7.4Z" fill="#3a3040"/></svg>
<div class="t" style="left:14.70px;top:198.50px;font-size:8.3px;color:#000;transform:scaleX(0.8740);transform-origin:0 0;">Компьютер 2013 министерство</div>
<div class="a" style="left:306.3px;top:195.4px;width:113.0px;height:13.93px;overflow:hidden">
<div class="t" style="left:4.20px;top:3.10px;font-size:8.3px;color:#000;transform:scaleX(0.8740);transform-origin:0 0;">121010040568</div>
</div>
<div class="a" style="left:420.3px;top:195.4px;width:15.899999999999977px;height:13.93px;overflow:hidden">
<div class="t" style="left:4.20px;top:3.10px;font-size:8.3px;color:#000;transform:scaleX(0.8740);transform-origin:0 0;">0...</div>
</div>
<div class="t" style="left:525.73px;top:198.50px;font-size:8.3px;color:#000;transform:scaleX(0.8740);transform-origin:0 0;">18 431,90</div>
<div class="t" style="left:566.23px;top:198.50px;font-size:8.3px;color:#000;transform:scaleX(0.8740);transform-origin:0 0;">18 431,90</div>
<div class="a" style="left:601.5px;top:195.4px;width:16.700000000000045px;height:13.93px;overflow:hidden">
<div class="t" style="left:4.20px;top:3.10px;font-size:8.3px;color:#000;transform:scaleX(0.8740);transform-origin:0 0;">0...</div>
</div>
<div class="a" style="left:619.2px;top:195.4px;width:122.0px;height:13.93px;overflow:hidden">
<div class="t" style="left:4.20px;top:3.10px;font-size:8.3px;color:#000;transform:scaleX(0.8740);transform-origin:0 0;">Расторгуев Денис Юрьевич</div>
</div>
<div class="a" style="left:742.2px;top:195.4px;width:16.399999999999977px;height:13.93px;overflow:hidden">
<div class="t" style="left:4.20px;top:3.10px;font-size:8.3px;color:#000;transform:scaleX(0.8740);transform-origin:0 0;">4</div>
</div>
<div class="a" style="left:759.6px;top:195.4px;width:15.899999999999977px;height:13.93px;overflow:hidden">
<div class="t" style="left:4.20px;top:3.10px;font-size:8.3px;color:#000;transform:scaleX(0.8740);transform-origin:0 0;">1...</div>
</div>
<div class="a" style="left:776.5px;top:195.4px;width:44.89999999999998px;height:13.93px;overflow:hidden">
<div class="t" style="left:4.20px;top:3.10px;font-size:8.3px;color:#000;transform:scaleX(0.8740);transform-origin:0 0;">31.12.2014</div>
</div>
<div class="a" style="left:822.4px;top:195.4px;width:16.0px;height:13.93px;overflow:hidden">
<div class="t" style="left:4.20px;top:3.10px;font-size:8.3px;color:#000;transform:scaleX(0.8740);transform-origin:0 0;">1...</div>
</div>
<div class="a" style="left:1004.9px;top:195.4px;width:15.899999999999977px;height:13.93px;overflow:hidden">
<div class="t" style="left:4.20px;top:3.10px;font-size:8.3px;color:#000;transform:scaleX(0.8740);transform-origin:0 0;">А...</div>
</div>
<div class="a" style="left:1021.8px;top:195.4px;width:16.700000000000045px;height:13.93px;overflow:hidden">
<div class="t" style="left:4.20px;top:3.10px;font-size:8.3px;color:#000;transform:scaleX(0.8740);transform-origin:0 0;">1</div>
</div>
<div class="a" style="left:1039.5px;top:195.4px;width:16.299999999999955px;height:13.93px;overflow:hidden">
<div class="t" style="left:4.20px;top:3.10px;font-size:8.3px;color:#000;transform:scaleX(0.8740);transform-origin:0 0;">36</div>
</div>
<div class="a" style="left:1056.8px;top:195.4px;width:16.100000000000136px;height:13.93px;overflow:hidden">
<div class="t" style="left:4.20px;top:3.10px;font-size:8.3px;color:#000;transform:scaleX(0.8740);transform-origin:0 0;">1...</div>
</div>
<svg class="a" style="left:2.7px;top:209.53px" width="11.5" height="11.5" viewBox="0 0 11.5 11.5"><defs><radialGradient id="g1" cx="50%" cy="55%" r="55%"><stop offset="0" stop-color="#b8f4f4"/><stop offset=".7" stop-color="#62d0d2"/><stop offset="1" stop-color="#2e9ca0"/></radialGradient></defs><circle cx="5.75" cy="5.75" r="5.45" fill="url(#g1)"/><path d="M4.9 3.0L7.7 5.2L4.9 7.4Z" fill="#3a3040"/></svg>
<div class="t" style="left:14.70px;top:212.43px;font-size:8.3px;color:#000;transform:scaleX(0.8740);transform-origin:0 0;">Компьютер (министерство)</div>
<div class="a" style="left:306.3px;top:209.33px;width:113.0px;height:13.93px;overflow:hidden">
<div class="t" style="left:4.20px;top:3.10px;font-size:8.3px;color:#000;transform:scaleX(0.8740);transform-origin:0 0;">12101040585</div>
</div>
<div class="a" style="left:420.3px;top:209.33px;width:15.899999999999977px;height:13.93px;overflow:hidden">
<div class="t" style="left:4.20px;top:3.10px;font-size:8.3px;color:#000;transform:scaleX(0.8740);transform-origin:0 0;">0...</div>
</div>
<div class="t" style="left:525.73px;top:212.43px;font-size:8.3px;color:#000;transform:scaleX(0.8740);transform-origin:0 0;">18 330,84</div>
<div class="t" style="left:566.23px;top:212.43px;font-size:8.3px;color:#000;transform:scaleX(0.8740);transform-origin:0 0;">18 330,84</div>
<div class="a" style="left:601.5px;top:209.33px;width:16.700000000000045px;height:13.93px;overflow:hidden">
<div class="t" style="left:4.20px;top:3.10px;font-size:8.3px;color:#000;transform:scaleX(0.8740);transform-origin:0 0;">0...</div>
</div>
<div class="a" style="left:619.2px;top:209.33px;width:122.0px;height:13.93px;overflow:hidden">
<div class="t" style="left:4.20px;top:3.10px;font-size:8.3px;color:#000;transform:scaleX(0.8740);transform-origin:0 0;">Гингер В Д</div>
</div>
<div class="a" style="left:742.2px;top:209.33px;width:16.399999999999977px;height:13.93px;overflow:hidden">
<div class="t" style="left:4.20px;top:3.10px;font-size:8.3px;color:#000;transform:scaleX(0.8740);transform-origin:0 0;">4</div>
</div>
<div class="a" style="left:759.6px;top:209.33px;width:15.899999999999977px;height:13.93px;overflow:hidden">
<div class="t" style="left:4.20px;top:3.10px;font-size:8.3px;color:#000;transform:scaleX(0.8740);transform-origin:0 0;">1...</div>
</div>
<div class="a" style="left:776.5px;top:209.33px;width:44.89999999999998px;height:13.93px;overflow:hidden">
<div class="t" style="left:4.20px;top:3.10px;font-size:8.3px;color:#000;transform:scaleX(0.8740);transform-origin:0 0;">31.05.2013</div>
</div>
<div class="a" style="left:822.4px;top:209.33px;width:16.0px;height:13.93px;overflow:hidden">
<div class="t" style="left:4.20px;top:3.10px;font-size:8.3px;color:#000;transform:scaleX(0.8740);transform-origin:0 0;">1...</div>
</div>
<div class="a" style="left:1004.9px;top:209.33px;width:15.899999999999977px;height:13.93px;overflow:hidden">
<div class="t" style="left:4.20px;top:3.10px;font-size:8.3px;color:#000;transform:scaleX(0.8740);transform-origin:0 0;">Пол</div>
</div>
<div class="a" style="left:1021.8px;top:209.33px;width:16.700000000000045px;height:13.93px;overflow:hidden">
<div class="t" style="left:4.20px;top:3.10px;font-size:8.3px;color:#000;transform:scaleX(0.8740);transform-origin:0 0;">1</div>
</div>
<div class="a" style="left:1039.5px;top:209.33px;width:16.299999999999955px;height:13.93px;overflow:hidden">
<div class="t" style="left:4.20px;top:3.10px;font-size:8.3px;color:#000;transform:scaleX(0.8740);transform-origin:0 0;">36</div>
</div>
<div class="a" style="left:1056.8px;top:209.33px;width:16.100000000000136px;height:13.93px;overflow:hidden">
<div class="t" style="left:4.20px;top:3.10px;font-size:8.3px;color:#000;transform:scaleX(0.8740);transform-origin:0 0;">1...</div>
</div>
<svg class="a" style="left:2.7px;top:223.45999999999998px" width="11.5" height="11.5" viewBox="0 0 11.5 11.5"><defs><radialGradient id="g2" cx="50%" cy="55%" r="55%"><stop offset="0" stop-color="#b8f4f4"/><stop offset=".7" stop-color="#62d0d2"/><stop offset="1" stop-color="#2e9ca0"/></radialGradient></defs><circle cx="5.75" cy="5.75" r="5.45" fill="url(#g2)"/><path d="M4.9 3.0L7.7 5.2L4.9 7.4Z" fill="#3a3040"/></svg>
<div class="t" style="left:14.70px;top:226.36px;font-size:8.3px;color:#000;transform:scaleX(0.8740);transform-origin:0 0;">Компьютер (министерство)</div>
<div class="a" style="left:306.3px;top:223.26px;width:113.0px;height:13.93px;overflow:hidden">
<div class="t" style="left:4.20px;top:3.10px;font-size:8.3px;color:#000;transform:scaleX(0.8740);transform-origin:0 0;">12101040588</div>
</div>
<div class="a" style="left:420.3px;top:223.26px;width:15.899999999999977px;height:13.93px;overflow:hidden">
<div class="t" style="left:4.20px;top:3.10px;font-size:8.3px;color:#000;transform:scaleX(0.8740);transform-origin:0 0;">0...</div>
</div>
<div class="t" style="left:525.73px;top:226.36px;font-size:8.3px;color:#000;transform:scaleX(0.8740);transform-origin:0 0;">18 330,84</div>
<div class="t" style="left:566.23px;top:226.36px;font-size:8.3px;color:#000;transform:scaleX(0.8740);transform-origin:0 0;">18 330,84</div>
<div class="a" style="left:601.5px;top:223.26px;width:16.700000000000045px;height:13.93px;overflow:hidden">
<div class="t" style="left:4.20px;top:3.10px;font-size:8.3px;color:#000;transform:scaleX(0.8740);transform-origin:0 0;">0...</div>
</div>
<div class="a" style="left:619.2px;top:223.26px;width:122.0px;height:13.93px;overflow:hidden">
<div class="t" style="left:4.20px;top:3.10px;font-size:8.3px;color:#000;transform:scaleX(0.8740);transform-origin:0 0;">Гингер В Д</div>
</div>
<div class="a" style="left:742.2px;top:223.26px;width:16.399999999999977px;height:13.93px;overflow:hidden">
<div class="t" style="left:4.20px;top:3.10px;font-size:8.3px;color:#000;transform:scaleX(0.8740);transform-origin:0 0;">4</div>
</div>
<div class="a" style="left:759.6px;top:223.26px;width:15.899999999999977px;height:13.93px;overflow:hidden">
<div class="t" style="left:4.20px;top:3.10px;font-size:8.3px;color:#000;transform:scaleX(0.8740);transform-origin:0 0;">1...</div>
</div>
<div class="a" style="left:776.5px;top:223.26px;width:44.89999999999998px;height:13.93px;overflow:hidden">
<div class="t" style="left:4.20px;top:3.10px;font-size:8.3px;color:#000;transform:scaleX(0.8740);transform-origin:0 0;">31.05.2013</div>
</div>
<div class="a" style="left:822.4px;top:223.26px;width:16.0px;height:13.93px;overflow:hidden">
<div class="t" style="left:4.20px;top:3.10px;font-size:8.3px;color:#000;transform:scaleX(0.8740);transform-origin:0 0;">1...</div>
</div>
<div class="a" style="left:1004.9px;top:223.26px;width:15.899999999999977px;height:13.93px;overflow:hidden">
<div class="t" style="left:4.20px;top:3.10px;font-size:8.3px;color:#000;transform:scaleX(0.8740);transform-origin:0 0;">Пол</div>
</div>
<div class="a" style="left:1021.8px;top:223.26px;width:16.700000000000045px;height:13.93px;overflow:hidden">
<div class="t" style="left:4.20px;top:3.10px;font-size:8.3px;color:#000;transform:scaleX(0.8740);transform-origin:0 0;">1</div>
</div>
<div class="a" style="left:1039.5px;top:223.26px;width:16.299999999999955px;height:13.93px;overflow:hidden">
<div class="t" style="left:4.20px;top:3.10px;font-size:8.3px;color:#000;transform:scaleX(0.8740);transform-origin:0 0;">36</div>
</div>
<div class="a" style="left:1056.8px;top:223.26px;width:16.100000000000136px;height:13.93px;overflow:hidden">
<div class="t" style="left:4.20px;top:3.10px;font-size:8.3px;color:#000;transform:scaleX(0.8740);transform-origin:0 0;">1...</div>
</div>
<svg class="a" style="left:2.7px;top:237.39px" width="11.5" height="11.5" viewBox="0 0 11.5 11.5"><defs><radialGradient id="g3" cx="50%" cy="55%" r="55%"><stop offset="0" stop-color="#b8f4f4"/><stop offset=".7" stop-color="#62d0d2"/><stop offset="1" stop-color="#2e9ca0"/></radialGradient></defs><circle cx="5.75" cy="5.75" r="5.45" fill="url(#g3)"/><path d="M4.9 3.0L7.7 5.2L4.9 7.4Z" fill="#3a3040"/></svg>
<div class="t" style="left:14.70px;top:240.29px;font-size:8.3px;color:#000;transform:scaleX(0.8740);transform-origin:0 0;">Компьютер (министерство)</div>
<div class="a" style="left:306.3px;top:237.19px;width:113.0px;height:13.93px;overflow:hidden">
<div class="t" style="left:4.20px;top:3.10px;font-size:8.3px;color:#000;transform:scaleX(0.8740);transform-origin:0 0;">12101040587</div>
</div>
<div class="a" style="left:420.3px;top:237.19px;width:15.899999999999977px;height:13.93px;overflow:hidden">
<div class="t" style="left:4.20px;top:3.10px;font-size:8.3px;color:#000;transform:scaleX(0.8740);transform-origin:0 0;">0...</div>
</div>
<div class="t" style="left:525.73px;top:240.29px;font-size:8.3px;color:#000;transform:scaleX(0.8740);transform-origin:0 0;">18 330,84</div>
<div class="t" style="left:566.23px;top:240.29px;font-size:8.3px;color:#000;transform:scaleX(0.8740);transform-origin:0 0;">18 330,84</div>
<div class="a" style="left:601.5px;top:237.19px;width:16.700000000000045px;height:13.93px;overflow:hidden">
<div class="t" style="left:4.20px;top:3.10px;font-size:8.3px;color:#000;transform:scaleX(0.8740);transform-origin:0 0;">0...</div>
</div>
<div class="a" style="left:619.2px;top:237.19px;width:122.0px;height:13.93px;overflow:hidden">
<div class="t" style="left:4.20px;top:3.10px;font-size:8.3px;color:#000;transform:scaleX(0.8740);transform-origin:0 0;">Гингер В Д</div>
</div>
<div class="a" style="left:742.2px;top:237.19px;width:16.399999999999977px;height:13.93px;overflow:hidden">
<div class="t" style="left:4.20px;top:3.10px;font-size:8.3px;color:#000;transform:scaleX(0.8740);transform-origin:0 0;">4</div>
</div>
<div class="a" style="left:759.6px;top:237.19px;width:15.899999999999977px;height:13.93px;overflow:hidden">
<div class="t" style="left:4.20px;top:3.10px;font-size:8.3px;color:#000;transform:scaleX(0.8740);transform-origin:0 0;">1...</div>
</div>
<div class="a" style="left:776.5px;top:237.19px;width:44.89999999999998px;height:13.93px;overflow:hidden">
<div class="t" style="left:4.20px;top:3.10px;font-size:8.3px;color:#000;transform:scaleX(0.8740);transform-origin:0 0;">31.05.2013</div>
</div>
<div class="a" style="left:822.4px;top:237.19px;width:16.0px;height:13.93px;overflow:hidden">
<div class="t" style="left:4.20px;top:3.10px;font-size:8.3px;color:#000;transform:scaleX(0.8740);transform-origin:0 0;">1...</div>
</div>
<div class="a" style="left:1004.9px;top:237.19px;width:15.899999999999977px;height:13.93px;overflow:hidden">
<div class="t" style="left:4.20px;top:3.10px;font-size:8.3px;color:#000;transform:scaleX(0.8740);transform-origin:0 0;">Пол</div>
</div>
<div class="a" style="left:1021.8px;top:237.19px;width:16.700000000000045px;height:13.93px;overflow:hidden">
<div class="t" style="left:4.20px;top:3.10px;font-size:8.3px;color:#000;transform:scaleX(0.8740);transform-origin:0 0;">1</div>
</div>
<div class="a" style="left:1039.5px;top:237.19px;width:16.299999999999955px;height:13.93px;overflow:hidden">
<div class="t" style="left:4.20px;top:3.10px;font-size:8.3px;color:#000;transform:scaleX(0.8740);transform-origin:0 0;">36</div>
</div>
<div class="a" style="left:1056.8px;top:237.19px;width:16.100000000000136px;height:13.93px;overflow:hidden">
<div class="t" style="left:4.20px;top:3.10px;font-size:8.3px;color:#000;transform:scaleX(0.8740);transform-origin:0 0;">1...</div>
</div>
<svg class="a" style="left:2.7px;top:251.32px" width="11.5" height="11.5" viewBox="0 0 11.5 11.5"><defs><radialGradient id="g4" cx="50%" cy="55%" r="55%"><stop offset="0" stop-color="#b8f4f4"/><stop offset=".7" stop-color="#62d0d2"/><stop offset="1" stop-color="#2e9ca0"/></radialGradient></defs><circle cx="5.75" cy="5.75" r="5.45" fill="url(#g4)"/><path d="M4.9 3.0L7.7 5.2L4.9 7.4Z" fill="#3a3040"/></svg>
<div class="t" style="left:14.70px;top:254.22px;font-size:8.3px;color:#000;transform:scaleX(0.8740);transform-origin:0 0;">Компьютер (министерство)</div>
<div class="a" style="left:306.3px;top:251.12px;width:113.0px;height:13.93px;overflow:hidden">
<div class="t" style="left:4.20px;top:3.10px;font-size:8.3px;color:#000;transform:scaleX(0.8740);transform-origin:0 0;">12101040586</div>
</div>
<div class="a" style="left:420.3px;top:251.12px;width:15.899999999999977px;height:13.93px;overflow:hidden">
<div class="t" style="left:4.20px;top:3.10px;font-size:8.3px;color:#000;transform:scaleX(0.8740);transform-origin:0 0;">0...</div>
</div>
<div class="t" style="left:525.73px;top:254.22px;font-size:8.3px;color:#000;transform:scaleX(0.8740);transform-origin:0 0;">18 330,84</div>
<div class="t" style="left:566.23px;top:254.22px;font-size:8.3px;color:#000;transform:scaleX(0.8740);transform-origin:0 0;">18 330,84</div>
<div class="a" style="left:601.5px;top:251.12px;width:16.700000000000045px;height:13.93px;overflow:hidden">
<div class="t" style="left:4.20px;top:3.10px;font-size:8.3px;color:#000;transform:scaleX(0.8740);transform-origin:0 0;">0...</div>
</div>
<div class="a" style="left:619.2px;top:251.12px;width:122.0px;height:13.93px;overflow:hidden">
<div class="t" style="left:4.20px;top:3.10px;font-size:8.3px;color:#000;transform:scaleX(0.8740);transform-origin:0 0;">Гингер В Д</div>
</div>
<div class="a" style="left:742.2px;top:251.12px;width:16.399999999999977px;height:13.93px;overflow:hidden">
<div class="t" style="left:4.20px;top:3.10px;font-size:8.3px;color:#000;transform:scaleX(0.8740);transform-origin:0 0;">4</div>
</div>
<div class="a" style="left:759.6px;top:251.12px;width:15.899999999999977px;height:13.93px;overflow:hidden">
<div class="t" style="left:4.20px;top:3.10px;font-size:8.3px;color:#000;transform:scaleX(0.8740);transform-origin:0 0;">1...</div>
</div>
<div class="a" style="left:776.5px;top:251.12px;width:44.89999999999998px;height:13.93px;overflow:hidden">
<div class="t" style="left:4.20px;top:3.10px;font-size:8.3px;color:#000;transform:scaleX(0.8740);transform-origin:0 0;">31.05.2013</div>
</div>
<div class="a" style="left:822.4px;top:251.12px;width:16.0px;height:13.93px;overflow:hidden">
<div class="t" style="left:4.20px;top:3.10px;font-size:8.3px;color:#000;transform:scaleX(0.8740);transform-origin:0 0;">1...</div>
</div>
<div class="a" style="left:1004.9px;top:251.12px;width:15.899999999999977px;height:13.93px;overflow:hidden">
<div class="t" style="left:4.20px;top:3.10px;font-size:8.3px;color:#000;transform:scaleX(0.8740);transform-origin:0 0;">Пол</div>
</div>
<div class="a" style="left:1021.8px;top:251.12px;width:16.700000000000045px;height:13.93px;overflow:hidden">
<div class="t" style="left:4.20px;top:3.10px;font-size:8.3px;color:#000;transform:scaleX(0.8740);transform-origin:0 0;">1</div>
</div>
<div class="a" style="left:1039.5px;top:251.12px;width:16.299999999999955px;height:13.93px;overflow:hidden">
<div class="t" style="left:4.20px;top:3.10px;font-size:8.3px;color:#000;transform:scaleX(0.8740);transform-origin:0 0;">36</div>
</div>
<div class="a" style="left:1056.8px;top:251.12px;width:16.100000000000136px;height:13.93px;overflow:hidden">
<div class="t" style="left:4.20px;top:3.10px;font-size:8.3px;color:#000;transform:scaleX(0.8740);transform-origin:0 0;">1...</div>
</div>
<svg class="a" style="left:2.7px;top:265.25px" width="11.5" height="11.5" viewBox="0 0 11.5 11.5"><defs><radialGradient id="g5" cx="50%" cy="55%" r="55%"><stop offset="0" stop-color="#b8f4f4"/><stop offset=".7" stop-color="#62d0d2"/><stop offset="1" stop-color="#2e9ca0"/></radialGradient></defs><circle cx="5.75" cy="5.75" r="5.45" fill="url(#g5)"/><path d="M4.9 3.0L7.7 5.2L4.9 7.4Z" fill="#3a3040"/></svg>
<div class="t" style="left:14.70px;top:268.15px;font-size:8.3px;color:#000;transform:scaleX(0.8740);transform-origin:0 0;">Компьютер (&nbsp; системный блок тонкий клиент</div>
<div class="a" style="left:306.3px;top:265.05px;width:113.0px;height:13.93px;overflow:hidden">
<div class="t" style="left:4.20px;top:3.10px;font-size:8.3px;color:#000;transform:scaleX(0.8740);transform-origin:0 0;">1210100400539</div>
</div>
<div class="a" style="left:420.3px;top:265.05px;width:15.899999999999977px;height:13.93px;overflow:hidden">
<div class="t" style="left:4.20px;top:3.10px;font-size:8.3px;color:#000;transform:scaleX(0.8740);transform-origin:0 0;">0...</div>
</div>
<div class="t" style="left:525.73px;top:268.15px;font-size:8.3px;color:#000;transform:scaleX(0.8740);transform-origin:0 0;">15 781,72</div>
<div class="t" style="left:566.23px;top:268.15px;font-size:8.3px;color:#000;transform:scaleX(0.8740);transform-origin:0 0;">15 781,72</div>
<div class="a" style="left:601.5px;top:265.05px;width:16.700000000000045px;height:13.93px;overflow:hidden">
<div class="t" style="left:4.20px;top:3.10px;font-size:8.3px;color:#000;transform:scaleX(0.8740);transform-origin:0 0;">0...</div>
</div>
<div class="a" style="left:619.2px;top:265.05px;width:122.0px;height:13.93px;overflow:hidden">
<div class="t" style="left:4.20px;top:3.10px;font-size:8.3px;color:#000;transform:scaleX(0.8740);transform-origin:0 0;">Ермоленко Светлана Николаевна</div>
</div>
<div class="a" style="left:742.2px;top:265.05px;width:16.399999999999977px;height:13.93px;overflow:hidden">
<div class="t" style="left:4.20px;top:3.10px;font-size:8.3px;color:#000;transform:scaleX(0.8740);transform-origin:0 0;">4</div>
</div>
<div class="a" style="left:759.6px;top:265.05px;width:15.899999999999977px;height:13.93px;overflow:hidden">
<div class="t" style="left:4.20px;top:3.10px;font-size:8.3px;color:#000;transform:scaleX(0.8740);transform-origin:0 0;">1...</div>
</div>
<div class="a" style="left:776.5px;top:265.05px;width:44.89999999999998px;height:13.93px;overflow:hidden">
<div class="t" style="left:4.20px;top:3.10px;font-size:8.3px;color:#000;transform:scaleX(0.8740);transform-origin:0 0;">31.12.2014</div>
</div>
<div class="a" style="left:822.4px;top:265.05px;width:16.0px;height:13.93px;overflow:hidden">
<div class="t" style="left:4.20px;top:3.10px;font-size:8.3px;color:#000;transform:scaleX(0.8740);transform-origin:0 0;">1...</div>
</div>
<div class="a" style="left:1004.9px;top:265.05px;width:15.899999999999977px;height:13.93px;overflow:hidden">
<div class="t" style="left:4.20px;top:3.10px;font-size:8.3px;color:#000;transform:scaleX(0.8740);transform-origin:0 0;">Э...</div>
</div>
<div class="a" style="left:1021.8px;top:265.05px;width:16.700000000000045px;height:13.93px;overflow:hidden">
<div class="t" style="left:4.20px;top:3.10px;font-size:8.3px;color:#000;transform:scaleX(0.8740);transform-origin:0 0;">1</div>
</div>
<div class="a" style="left:1039.5px;top:265.05px;width:16.299999999999955px;height:13.93px;overflow:hidden">
<div class="t" style="left:4.20px;top:3.10px;font-size:8.3px;color:#000;transform:scaleX(0.8740);transform-origin:0 0;">36</div>
</div>
<div class="a" style="left:1056.8px;top:265.05px;width:16.100000000000136px;height:13.93px;overflow:hidden">
<div class="t" style="left:4.20px;top:3.10px;font-size:8.3px;color:#000;transform:scaleX(0.8740);transform-origin:0 0;">1...</div>
</div>
<svg class="a" style="left:2.7px;top:279.18px" width="11.5" height="11.5" viewBox="0 0 11.5 11.5"><defs><radialGradient id="g6" cx="50%" cy="55%" r="55%"><stop offset="0" stop-color="#b8f4f4"/><stop offset=".7" stop-color="#62d0d2"/><stop offset="1" stop-color="#2e9ca0"/></radialGradient></defs><circle cx="5.75" cy="5.75" r="5.45" fill="url(#g6)"/><path d="M4.9 3.0L7.7 5.2L4.9 7.4Z" fill="#3a3040"/></svg>
<div class="t" style="left:14.70px;top:282.08px;font-size:8.3px;color:#000;transform:scaleX(0.8740);transform-origin:0 0;">Компьютер (&nbsp; системный блок тонкий клиент</div>
<div class="a" style="left:306.3px;top:278.98px;width:113.0px;height:13.93px;overflow:hidden">
<div class="t" style="left:4.20px;top:3.10px;font-size:8.3px;color:#000;transform:scaleX(0.8740);transform-origin:0 0;">1210100400541</div>
</div>
<div class="a" style="left:420.3px;top:278.98px;width:15.899999999999977px;height:13.93px;overflow:hidden">
<div class="t" style="left:4.20px;top:3.10px;font-size:8.3px;color:#000;transform:scaleX(0.8740);transform-origin:0 0;">0...</div>
</div>
<div class="t" style="left:525.73px;top:282.08px;font-size:8.3px;color:#000;transform:scaleX(0.8740);transform-origin:0 0;">15 782,37</div>
<div class="t" style="left:566.23px;top:282.08px;font-size:8.3px;color:#000;transform:scaleX(0.8740);transform-origin:0 0;">15 782,37</div>
<div class="a" style="left:601.5px;top:278.98px;width:16.700000000000045px;height:13.93px;overflow:hidden">
<div class="t" style="left:4.20px;top:3.10px;font-size:8.3px;color:#000;transform:scaleX(0.8740);transform-origin:0 0;">0...</div>
</div>
<div class="a" style="left:619.2px;top:278.98px;width:122.0px;height:13.93px;overflow:hidden">
<div class="t" style="left:4.20px;top:3.10px;font-size:8.3px;color:#000;transform:scaleX(0.8740);transform-origin:0 0;">Гингер В Д</div>
</div>
<div class="a" style="left:742.2px;top:278.98px;width:16.399999999999977px;height:13.93px;overflow:hidden">
<div class="t" style="left:4.20px;top:3.10px;font-size:8.3px;color:#000;transform:scaleX(0.8740);transform-origin:0 0;">4</div>
</div>
<div class="a" style="left:759.6px;top:278.98px;width:15.899999999999977px;height:13.93px;overflow:hidden">
<div class="t" style="left:4.20px;top:3.10px;font-size:8.3px;color:#000;transform:scaleX(0.8740);transform-origin:0 0;">1...</div>
</div>
<div class="a" style="left:776.5px;top:278.98px;width:44.89999999999998px;height:13.93px;overflow:hidden">
<div class="t" style="left:4.20px;top:3.10px;font-size:8.3px;color:#000;transform:scaleX(0.8740);transform-origin:0 0;">31.05.2013</div>
</div>
<div class="a" style="left:822.4px;top:278.98px;width:16.0px;height:13.93px;overflow:hidden">
<div class="t" style="left:4.20px;top:3.10px;font-size:8.3px;color:#000;transform:scaleX(0.8740);transform-origin:0 0;">1...</div>
</div>
<div class="a" style="left:1004.9px;top:278.98px;width:15.899999999999977px;height:13.93px;overflow:hidden">
<div class="t" style="left:4.20px;top:3.10px;font-size:8.3px;color:#000;transform:scaleX(0.8740);transform-origin:0 0;">Пол</div>
</div>
<div class="a" style="left:1021.8px;top:278.98px;width:16.700000000000045px;height:13.93px;overflow:hidden">
<div class="t" style="left:4.20px;top:3.10px;font-size:8.3px;color:#000;transform:scaleX(0.8740);transform-origin:0 0;">1</div>
</div>
<div class="a" style="left:1039.5px;top:278.98px;width:16.299999999999955px;height:13.93px;overflow:hidden">
<div class="t" style="left:4.20px;top:3.10px;font-size:8.3px;color:#000;transform:scaleX(0.8740);transform-origin:0 0;">36</div>
</div>
<div class="a" style="left:1056.8px;top:278.98px;width:16.100000000000136px;height:13.93px;overflow:hidden">
<div class="t" style="left:4.20px;top:3.10px;font-size:8.3px;color:#000;transform:scaleX(0.8740);transform-origin:0 0;">1...</div>
</div>
<svg class="a" style="left:2.7px;top:293.10999999999996px" width="11.5" height="11.5" viewBox="0 0 11.5 11.5"><defs><radialGradient id="g7" cx="50%" cy="55%" r="55%"><stop offset="0" stop-color="#b8f4f4"/><stop offset=".7" stop-color="#62d0d2"/><stop offset="1" stop-color="#2e9ca0"/></radialGradient></defs><circle cx="5.75" cy="5.75" r="5.45" fill="url(#g7)"/><path d="M4.9 3.0L7.7 5.2L4.9 7.4Z" fill="#3a3040"/></svg>
<div class="t" style="left:14.70px;top:296.01px;font-size:8.3px;color:#000;transform:scaleX(0.8740);transform-origin:0 0;">Компьютер (&nbsp; системный блок тонкий клиент</div>
<div class="a" style="left:306.3px;top:292.90999999999997px;width:113.0px;height:13.93px;overflow:hidden">
<div class="t" style="left:4.20px;top:3.10px;font-size:8.3px;color:#000;transform:scaleX(0.8740);transform-origin:0 0;">1210100400542</div>
</div>
<div class="a" style="left:420.3px;top:292.90999999999997px;width:15.899999999999977px;height:13.93px;overflow:hidden">
<div class="t" style="left:4.20px;top:3.10px;font-size:8.3px;color:#000;transform:scaleX(0.8740);transform-origin:0 0;">0...</div>
</div>
<div class="t" style="left:525.73px;top:296.01px;font-size:8.3px;color:#000;transform:scaleX(0.8740);transform-origin:0 0;">15 781,00</div>
<div class="t" style="left:566.23px;top:296.01px;font-size:8.3px;color:#000;transform:scaleX(0.8740);transform-origin:0 0;">15 781,00</div>
<div class="a" style="left:601.5px;top:292.90999999999997px;width:16.700000000000045px;height:13.93px;overflow:hidden">
<div class="t" style="left:4.20px;top:3.10px;font-size:8.3px;color:#000;transform:scaleX(0.8740);transform-origin:0 0;">0...</div>
</div>
<div class="a" style="left:619.2px;top:292.90999999999997px;width:122.0px;height:13.93px;overflow:hidden">
<div class="t" style="left:4.20px;top:3.10px;font-size:8.3px;color:#000;transform:scaleX(0.8740);transform-origin:0 0;">Гингер В Д</div>
</div>
<div class="a" style="left:742.2px;top:292.90999999999997px;width:16.399999999999977px;height:13.93px;overflow:hidden">
<div class="t" style="left:4.20px;top:3.10px;font-size:8.3px;color:#000;transform:scaleX(0.8740);transform-origin:0 0;">4</div>
</div>
<div class="a" style="left:759.6px;top:292.90999999999997px;width:15.899999999999977px;height:13.93px;overflow:hidden">
<div class="t" style="left:4.20px;top:3.10px;font-size:8.3px;color:#000;transform:scaleX(0.8740);transform-origin:0 0;">1...</div>
</div>
<div class="a" style="left:776.5px;top:292.90999999999997px;width:44.89999999999998px;height:13.93px;overflow:hidden">
<div class="t" style="left:4.20px;top:3.10px;font-size:8.3px;color:#000;transform:scaleX(0.8740);transform-origin:0 0;">31.05.2013</div>
</div>
<div class="a" style="left:822.4px;top:292.90999999999997px;width:16.0px;height:13.93px;overflow:hidden">
<div class="t" style="left:4.20px;top:3.10px;font-size:8.3px;color:#000;transform:scaleX(0.8740);transform-origin:0 0;">1...</div>
</div>
<div class="a" style="left:1004.9px;top:292.90999999999997px;width:15.899999999999977px;height:13.93px;overflow:hidden">
<div class="t" style="left:4.20px;top:3.10px;font-size:8.3px;color:#000;transform:scaleX(0.8740);transform-origin:0 0;">Пол</div>
</div>
<div class="a" style="left:1021.8px;top:292.90999999999997px;width:16.700000000000045px;height:13.93px;overflow:hidden">
<div class="t" style="left:4.20px;top:3.10px;font-size:8.3px;color:#000;transform:scaleX(0.8740);transform-origin:0 0;">1</div>
</div>
<div class="a" style="left:1039.5px;top:292.90999999999997px;width:16.299999999999955px;height:13.93px;overflow:hidden">
<div class="t" style="left:4.20px;top:3.10px;font-size:8.3px;color:#000;transform:scaleX(0.8740);transform-origin:0 0;">36</div>
</div>
<div class="a" style="left:1056.8px;top:292.90999999999997px;width:16.100000000000136px;height:13.93px;overflow:hidden">
<div class="t" style="left:4.20px;top:3.10px;font-size:8.3px;color:#000;transform:scaleX(0.8740);transform-origin:0 0;">1...</div>
</div>
<svg class="a" style="left:2.7px;top:307.04px" width="11.5" height="11.5" viewBox="0 0 11.5 11.5"><defs><radialGradient id="g8" cx="50%" cy="55%" r="55%"><stop offset="0" stop-color="#b8f4f4"/><stop offset=".7" stop-color="#62d0d2"/><stop offset="1" stop-color="#2e9ca0"/></radialGradient></defs><circle cx="5.75" cy="5.75" r="5.45" fill="url(#g8)"/><path d="M4.9 3.0L7.7 5.2L4.9 7.4Z" fill="#3a3040"/></svg>
<div class="t" style="left:14.70px;top:309.94px;font-size:8.3px;color:#000;transform:scaleX(0.8740);transform-origin:0 0;">Компьютер (&nbsp; системный блок тонкий клиент</div>
<div class="a" style="left:306.3px;top:306.84000000000003px;width:113.0px;height:13.93px;overflow:hidden">
<div class="t" style="left:4.20px;top:3.10px;font-size:8.3px;color:#000;transform:scaleX(0.8740);transform-origin:0 0;">1210100400536</div>
</div>
<div class="a" style="left:420.3px;top:306.84000000000003px;width:15.899999999999977px;height:13.93px;overflow:hidden">
<div class="t" style="left:4.20px;top:3.10px;font-size:8.3px;color:#000;transform:scaleX(0.8740);transform-origin:0 0;">0...</div>
</div>
<div class="t" style="left:525.73px;top:309.94px;font-size:8.3px;color:#000;transform:scaleX(0.8740);transform-origin:0 0;">15 781,00</div>
<div class="t" style="left:566.23px;top:309.94px;font-size:8.3px;color:#000;transform:scaleX(0.8740);transform-origin:0 0;">15 781,00</div>
<div class="a" style="left:601.5px;top:306.84000000000003px;width:16.700000000000045px;height:13.93px;overflow:hidden">
<div class="t" style="left:4.20px;top:3.10px;font-size:8.3px;color:#000;transform:scaleX(0.8740);transform-origin:0 0;">0...</div>
</div>
<div class="a" style="left:619.2px;top:306.84000000000003px;width:122.0px;height:13.93px;overflow:hidden">
<div class="t" style="left:4.20px;top:3.10px;font-size:8.3px;color:#000;transform:scaleX(0.8740);transform-origin:0 0;">Гингер В Д</div>
</div>
<div class="a" style="left:742.2px;top:306.84000000000003px;width:16.399999999999977px;height:13.93px;overflow:hidden">
<div class="t" style="left:4.20px;top:3.10px;font-size:8.3px;color:#000;transform:scaleX(0.8740);transform-origin:0 0;">4</div>
</div>
<div class="a" style="left:759.6px;top:306.84000000000003px;width:15.899999999999977px;height:13.93px;overflow:hidden">
<div class="t" style="left:4.20px;top:3.10px;font-size:8.3px;color:#000;transform:scaleX(0.8740);transform-origin:0 0;">1...</div>
</div>
<div class="a" style="left:776.5px;top:306.84000000000003px;width:44.89999999999998px;height:13.93px;overflow:hidden">
<div class="t" style="left:4.20px;top:3.10px;font-size:8.3px;color:#000;transform:scaleX(0.8740);transform-origin:0 0;">31.05.2013</div>
</div>
<div class="a" style="left:822.4px;top:306.84000000000003px;width:16.0px;height:13.93px;overflow:hidden">
<div class="t" style="left:4.20px;top:3.10px;font-size:8.3px;color:#000;transform:scaleX(0.8740);transform-origin:0 0;">1...</div>
</div>
<div class="a" style="left:1004.9px;top:306.84000000000003px;width:15.899999999999977px;height:13.93px;overflow:hidden">
<div class="t" style="left:4.20px;top:3.10px;font-size:8.3px;color:#000;transform:scaleX(0.8740);transform-origin:0 0;">Пол</div>
</div>
<div class="a" style="left:1021.8px;top:306.84000000000003px;width:16.700000000000045px;height:13.93px;overflow:hidden">
<div class="t" style="left:4.20px;top:3.10px;font-size:8.3px;color:#000;transform:scaleX(0.8740);transform-origin:0 0;">1</div>
</div>
<div class="a" style="left:1039.5px;top:306.84000000000003px;width:16.299999999999955px;height:13.93px;overflow:hidden">
<div class="t" style="left:4.20px;top:3.10px;font-size:8.3px;color:#000;transform:scaleX(0.8740);transform-origin:0 0;">36</div>
</div>
<div class="a" style="left:1056.8px;top:306.84000000000003px;width:16.100000000000136px;height:13.93px;overflow:hidden">
<div class="t" style="left:4.20px;top:3.10px;font-size:8.3px;color:#000;transform:scaleX(0.8740);transform-origin:0 0;">1...</div>
</div>
<svg class="a" style="left:2.7px;top:320.96999999999997px" width="11.5" height="11.5" viewBox="0 0 11.5 11.5"><defs><radialGradient id="g9" cx="50%" cy="55%" r="55%"><stop offset="0" stop-color="#b8f4f4"/><stop offset=".7" stop-color="#62d0d2"/><stop offset="1" stop-color="#2e9ca0"/></radialGradient></defs><circle cx="5.75" cy="5.75" r="5.45" fill="url(#g9)"/><path d="M4.9 3.0L7.7 5.2L4.9 7.4Z" fill="#3a3040"/></svg>
<div class="t" style="left:14.70px;top:323.87px;font-size:8.3px;color:#000;transform:scaleX(0.8740);transform-origin:0 0;">Компьютер (&nbsp; системный блок тонкий клиент</div>
<div class="a" style="left:306.3px;top:320.77px;width:113.0px;height:13.93px;overflow:hidden">
<div class="t" style="left:4.20px;top:3.10px;font-size:8.3px;color:#000;transform:scaleX(0.8740);transform-origin:0 0;">1210100400538</div>
</div>
<div class="a" style="left:420.3px;top:320.77px;width:15.899999999999977px;height:13.93px;overflow:hidden">
<div class="t" style="left:4.20px;top:3.10px;font-size:8.3px;color:#000;transform:scaleX(0.8740);transform-origin:0 0;">0...</div>
</div>
<div class="t" style="left:525.73px;top:323.87px;font-size:8.3px;color:#000;transform:scaleX(0.8740);transform-origin:0 0;">15 781,72</div>
<div class="t" style="left:566.23px;top:323.87px;font-size:8.3px;color:#000;transform:scaleX(0.8740);transform-origin:0 0;">15 781,72</div>
<div class="a" style="left:601.5px;top:320.77px;width:16.700000000000045px;height:13.93px;overflow:hidden">
<div class="t" style="left:4.20px;top:3.10px;font-size:8.3px;color:#000;transform:scaleX(0.8740);transform-origin:0 0;">0...</div>
</div>
<div class="a" style="left:619.2px;top:320.77px;width:122.0px;height:13.93px;overflow:hidden">
<div class="t" style="left:4.20px;top:3.10px;font-size:8.3px;color:#000;transform:scaleX(0.8740);transform-origin:0 0;">Щербакова Светлана Михайловна</div>
</div>
<div class="a" style="left:742.2px;top:320.77px;width:16.399999999999977px;height:13.93px;overflow:hidden">
<div class="t" style="left:4.20px;top:3.10px;font-size:8.3px;color:#000;transform:scaleX(0.8740);transform-origin:0 0;">4</div>
</div>
<div class="a" style="left:759.6px;top:320.77px;width:15.899999999999977px;height:13.93px;overflow:hidden">
<div class="t" style="left:4.20px;top:3.10px;font-size:8.3px;color:#000;transform:scaleX(0.8740);transform-origin:0 0;">1...</div>
</div>
<div class="a" style="left:776.5px;top:320.77px;width:44.89999999999998px;height:13.93px;overflow:hidden">
<div class="t" style="left:4.20px;top:3.10px;font-size:8.3px;color:#000;transform:scaleX(0.8740);transform-origin:0 0;">31.12.2014</div>
</div>
<div class="a" style="left:822.4px;top:320.77px;width:16.0px;height:13.93px;overflow:hidden">
<div class="t" style="left:4.20px;top:3.10px;font-size:8.3px;color:#000;transform:scaleX(0.8740);transform-origin:0 0;">1...</div>
</div>
<div class="a" style="left:1004.9px;top:320.77px;width:15.899999999999977px;height:13.93px;overflow:hidden">
<div class="t" style="left:4.20px;top:3.10px;font-size:8.3px;color:#000;transform:scaleX(0.8740);transform-origin:0 0;">А...</div>
</div>
<div class="a" style="left:1021.8px;top:320.77px;width:16.700000000000045px;height:13.93px;overflow:hidden">
<div class="t" style="left:4.20px;top:3.10px;font-size:8.3px;color:#000;transform:scaleX(0.8740);transform-origin:0 0;">1</div>
</div>
<div class="a" style="left:1039.5px;top:320.77px;width:16.299999999999955px;height:13.93px;overflow:hidden">
<div class="t" style="left:4.20px;top:3.10px;font-size:8.3px;color:#000;transform:scaleX(0.8740);transform-origin:0 0;">36</div>
</div>
<div class="a" style="left:1056.8px;top:320.77px;width:16.100000000000136px;height:13.93px;overflow:hidden">
<div class="t" style="left:4.20px;top:3.10px;font-size:8.3px;color:#000;transform:scaleX(0.8740);transform-origin:0 0;">1...</div>
</div>
<div class="a" style="left:1125.8px;top:320.77px;width:16.200000000000045px;height:13.93px;overflow:hidden">
<div class="t" style="left:4.20px;top:3.10px;font-size:8.3px;color:#000;transform:scaleX(0.8740);transform-origin:0 0;">Про</div>
</div>
<svg class="a" style="left:2.7px;top:334.90000000000003px" width="11.5" height="11.5" viewBox="0 0 11.5 11.5"><defs><radialGradient id="g10" cx="50%" cy="55%" r="55%"><stop offset="0" stop-color="#b8f4f4"/><stop offset=".7" stop-color="#62d0d2"/><stop offset="1" stop-color="#2e9ca0"/></radialGradient></defs><circle cx="5.75" cy="5.75" r="5.45" fill="url(#g10)"/><path d="M4.9 3.0L7.7 5.2L4.9 7.4Z" fill="#3a3040"/></svg>
<div class="t" style="left:14.70px;top:337.80px;font-size:8.3px;color:#000;transform:scaleX(0.8740);transform-origin:0 0;">Компьютер (&nbsp; системный блок тонкий клиент</div>
<div class="a" style="left:306.3px;top:334.70000000000005px;width:113.0px;height:13.93px;overflow:hidden">
<div class="t" style="left:4.20px;top:3.10px;font-size:8.3px;color:#000;transform:scaleX(0.8740);transform-origin:0 0;">1210100400537</div>
</div>
<div class="a" style="left:420.3px;top:334.70000000000005px;width:15.899999999999977px;height:13.93px;overflow:hidden">
<div class="t" style="left:4.20px;top:3.10px;font-size:8.3px;color:#000;transform:scaleX(0.8740);transform-origin:0 0;">0...</div>
</div>
<div class="t" style="left:525.73px;top:337.80px;font-size:8.3px;color:#000;transform:scaleX(0.8740);transform-origin:0 0;">15 781,72</div>
<div class="t" style="left:566.23px;top:337.80px;font-size:8.3px;color:#000;transform:scaleX(0.8740);transform-origin:0 0;">15 781,72</div>
<div class="a" style="left:601.5px;top:334.70000000000005px;width:16.700000000000045px;height:13.93px;overflow:hidden">
<div class="t" style="left:4.20px;top:3.10px;font-size:8.3px;color:#000;transform:scaleX(0.8740);transform-origin:0 0;">0...</div>
</div>
<div class="a" style="left:619.2px;top:334.70000000000005px;width:122.0px;height:13.93px;overflow:hidden">
<div class="t" style="left:4.20px;top:3.10px;font-size:8.3px;color:#000;transform:scaleX(0.8740);transform-origin:0 0;">Шаурко Ольга Юрьевна</div>
</div>
<div class="a" style="left:742.2px;top:334.70000000000005px;width:16.399999999999977px;height:13.93px;overflow:hidden">
<div class="t" style="left:4.20px;top:3.10px;font-size:8.3px;color:#000;transform:scaleX(0.8740);transform-origin:0 0;">4</div>
</div>
<div class="a" style="left:759.6px;top:334.70000000000005px;width:15.899999999999977px;height:13.93px;overflow:hidden">
<div class="t" style="left:4.20px;top:3.10px;font-size:8.3px;color:#000;transform:scaleX(0.8740);transform-origin:0 0;">1...</div>
</div>
<div class="a" style="left:776.5px;top:334.70000000000005px;width:44.89999999999998px;height:13.93px;overflow:hidden">
<div class="t" style="left:4.20px;top:3.10px;font-size:8.3px;color:#000;transform:scaleX(0.8740);transform-origin:0 0;">31.12.2014</div>
</div>
<div class="a" style="left:822.4px;top:334.70000000000005px;width:16.0px;height:13.93px;overflow:hidden">
<div class="t" style="left:4.20px;top:3.10px;font-size:8.3px;color:#000;transform:scaleX(0.8740);transform-origin:0 0;">1...</div>
</div>
<div class="a" style="left:1004.9px;top:334.70000000000005px;width:15.899999999999977px;height:13.93px;overflow:hidden">
<div class="t" style="left:4.20px;top:3.10px;font-size:8.3px;color:#000;transform:scaleX(0.8740);transform-origin:0 0;">С...</div>
</div>
<div class="a" style="left:1021.8px;top:334.70000000000005px;width:16.700000000000045px;height:13.93px;overflow:hidden">
<div class="t" style="left:4.20px;top:3.10px;font-size:8.3px;color:#000;transform:scaleX(0.8740);transform-origin:0 0;">1</div>
</div>
<div class="a" style="left:1039.5px;top:334.70000000000005px;width:16.299999999999955px;height:13.93px;overflow:hidden">
<div class="t" style="left:4.20px;top:3.10px;font-size:8.3px;color:#000;transform:scaleX(0.8740);transform-origin:0 0;">36</div>
</div>
<div class="a" style="left:1056.8px;top:334.70000000000005px;width:16.100000000000136px;height:13.93px;overflow:hidden">
<div class="t" style="left:4.20px;top:3.10px;font-size:8.3px;color:#000;transform:scaleX(0.8740);transform-origin:0 0;">1...</div>
</div>
<svg class="a" style="left:2.7px;top:348.83px" width="11.5" height="11.5" viewBox="0 0 11.5 11.5"><defs><radialGradient id="g11" cx="50%" cy="55%" r="55%"><stop offset="0" stop-color="#b8f4f4"/><stop offset=".7" stop-color="#62d0d2"/><stop offset="1" stop-color="#2e9ca0"/></radialGradient></defs><circle cx="5.75" cy="5.75" r="5.45" fill="url(#g11)"/><path d="M4.9 3.0L7.7 5.2L4.9 7.4Z" fill="#3a3040"/></svg>
<div class="t" style="left:14.70px;top:351.73px;font-size:8.3px;color:#000;transform:scaleX(0.8740);transform-origin:0 0;">Сервер в комплекте (корпус, процессор, п</div>
<div class="a" style="left:306.3px;top:348.63px;width:113.0px;height:13.93px;overflow:hidden">
<div class="t" style="left:4.20px;top:3.10px;font-size:8.3px;color:#000;transform:scaleX(0.8740);transform-origin:0 0;">121010405176</div>
</div>
<div class="a" style="left:420.3px;top:348.63px;width:15.899999999999977px;height:13.93px;overflow:hidden">
<div class="t" style="left:4.20px;top:3.10px;font-size:8.3px;color:#000;transform:scaleX(0.8740);transform-origin:0 0;">0...</div>
</div>
<div class="t" style="left:525.73px;top:351.73px;font-size:8.3px;color:#000;transform:scaleX(0.8740);transform-origin:0 0;">36 650,00</div>
<div class="t" style="left:566.23px;top:351.73px;font-size:8.3px;color:#000;transform:scaleX(0.8740);transform-origin:0 0;">36 650,00</div>
<div class="a" style="left:601.5px;top:348.63px;width:16.700000000000045px;height:13.93px;overflow:hidden">
<div class="t" style="left:4.20px;top:3.10px;font-size:8.3px;color:#000;transform:scaleX(0.8740);transform-origin:0 0;">0...</div>
</div>
<div class="a" style="left:619.2px;top:348.63px;width:122.0px;height:13.93px;overflow:hidden">
<div class="t" style="left:4.20px;top:3.10px;font-size:8.3px;color:#000;transform:scaleX(0.8740);transform-origin:0 0;">Гингер В Д</div>
</div>
<div class="a" style="left:742.2px;top:348.63px;width:16.399999999999977px;height:13.93px;overflow:hidden">
<div class="t" style="left:4.20px;top:3.10px;font-size:8.3px;color:#000;transform:scaleX(0.8740);transform-origin:0 0;">4</div>
</div>
<div class="a" style="left:759.6px;top:348.63px;width:15.899999999999977px;height:13.93px;overflow:hidden">
<div class="t" style="left:4.20px;top:3.10px;font-size:8.3px;color:#000;transform:scaleX(0.8740);transform-origin:0 0;">1...</div>
</div>
<div class="a" style="left:776.5px;top:348.63px;width:44.89999999999998px;height:13.93px;overflow:hidden">
<div class="t" style="left:4.20px;top:3.10px;font-size:8.3px;color:#000;transform:scaleX(0.8740);transform-origin:0 0;">31.12.2014</div>
</div>
<div class="a" style="left:822.4px;top:348.63px;width:16.0px;height:13.93px;overflow:hidden">
<div class="t" style="left:4.20px;top:3.10px;font-size:8.3px;color:#000;transform:scaleX(0.8740);transform-origin:0 0;">1...</div>
</div>
<div class="a" style="left:1004.9px;top:348.63px;width:15.899999999999977px;height:13.93px;overflow:hidden">
<div class="t" style="left:4.20px;top:3.10px;font-size:8.3px;color:#000;transform:scaleX(0.8740);transform-origin:0 0;">Пол</div>
</div>
<div class="a" style="left:1021.8px;top:348.63px;width:16.700000000000045px;height:13.93px;overflow:hidden">
<div class="t" style="left:4.20px;top:3.10px;font-size:8.3px;color:#000;transform:scaleX(0.8740);transform-origin:0 0;">1</div>
</div>
<div class="a" style="left:1039.5px;top:348.63px;width:16.299999999999955px;height:13.93px;overflow:hidden">
<div class="t" style="left:4.20px;top:3.10px;font-size:8.3px;color:#000;transform:scaleX(0.8740);transform-origin:0 0;">36</div>
</div>
<div class="a" style="left:1056.8px;top:348.63px;width:16.100000000000136px;height:13.93px;overflow:hidden">
<div class="t" style="left:4.20px;top:3.10px;font-size:8.3px;color:#000;transform:scaleX(0.8740);transform-origin:0 0;">1...</div>
</div>
<svg class="a" style="left:2.7px;top:362.76px" width="11.5" height="11.5" viewBox="0 0 11.5 11.5"><defs><radialGradient id="g12" cx="50%" cy="55%" r="55%"><stop offset="0" stop-color="#9ef39a"/><stop offset=".7" stop-color="#58dc52"/><stop offset="1" stop-color="#32b030"/></radialGradient></defs><circle cx="5.75" cy="5.75" r="5.45" fill="url(#g12)"/><path d="M4.9 3.0L7.7 5.2L4.9 7.4Z" fill="#3a3040"/></svg>
<div class="t" style="left:14.70px;top:365.66px;font-size:8.3px;color:#000;transform:scaleX(0.8740);transform-origin:0 0;">Vip Net 2016</div>
<div class="a" style="left:306.3px;top:362.56px;width:113.0px;height:13.93px;overflow:hidden">
<div class="t" style="left:4.20px;top:3.10px;font-size:8.3px;color:#000;transform:scaleX(0.8740);transform-origin:0 0;">121010404643</div>
</div>
<div class="a" style="left:420.3px;top:362.56px;width:15.899999999999977px;height:13.93px;overflow:hidden">
<div class="t" style="left:4.20px;top:3.10px;font-size:8.3px;color:#000;transform:scaleX(0.8740);transform-origin:0 0;">0...</div>
</div>
<div class="t" style="left:521.70px;top:365.66px;font-size:8.3px;color:#000;transform:scaleX(0.8740);transform-origin:0 0;">306 296,88</div>
<div class="t" style="left:566.23px;top:365.66px;font-size:8.3px;color:#000;transform:scaleX(0.8740);transform-origin:0 0;">306 296...</div>
<div class="a" style="left:601.5px;top:362.56px;width:16.700000000000045px;height:13.93px;overflow:hidden">
<div class="t" style="left:4.20px;top:3.10px;font-size:8.3px;color:#000;transform:scaleX(0.8740);transform-origin:0 0;">0...</div>
</div>
<div class="a" style="left:619.2px;top:362.56px;width:122.0px;height:13.93px;overflow:hidden">
<div class="t" style="left:4.20px;top:3.10px;font-size:8.3px;color:#000;transform:scaleX(0.8740);transform-origin:0 0;">Расторгуев Денис Юрьевич</div>
</div>
<div class="a" style="left:742.2px;top:362.56px;width:16.399999999999977px;height:13.93px;overflow:hidden">
<div class="t" style="left:4.20px;top:3.10px;font-size:8.3px;color:#000;transform:scaleX(0.8740);transform-origin:0 0;">4</div>
</div>
<div class="a" style="left:759.6px;top:362.56px;width:15.899999999999977px;height:13.93px;overflow:hidden">
<div class="t" style="left:4.20px;top:3.10px;font-size:8.3px;color:#000;transform:scaleX(0.8740);transform-origin:0 0;">1...</div>
</div>
<div class="a" style="left:776.5px;top:362.56px;width:44.89999999999998px;height:13.93px;overflow:hidden">
<div class="t" style="left:4.20px;top:3.10px;font-size:8.3px;color:#000;transform:scaleX(0.8740);transform-origin:0 0;">12.07.2016</div>
</div>
<div class="a" style="left:822.4px;top:362.56px;width:16.0px;height:13.93px;overflow:hidden">
<div class="t" style="left:4.20px;top:3.10px;font-size:8.3px;color:#000;transform:scaleX(0.8740);transform-origin:0 0;">1...</div>
</div>
<div class="a" style="left:1004.9px;top:362.56px;width:15.899999999999977px;height:13.93px;overflow:hidden">
<div class="t" style="left:4.20px;top:3.10px;font-size:8.3px;color:#000;transform:scaleX(0.8740);transform-origin:0 0;">А...</div>
</div>
<div class="a" style="left:1021.8px;top:362.56px;width:16.700000000000045px;height:13.93px;overflow:hidden">
<div class="t" style="left:4.20px;top:3.10px;font-size:8.3px;color:#000;transform:scaleX(0.8740);transform-origin:0 0;">1</div>
</div>
<div class="a" style="left:1039.5px;top:362.56px;width:16.299999999999955px;height:13.93px;overflow:hidden">
<div class="t" style="left:4.20px;top:3.10px;font-size:8.3px;color:#000;transform:scaleX(0.8740);transform-origin:0 0;">36</div>
</div>
<div class="a" style="left:1056.8px;top:362.56px;width:16.100000000000136px;height:13.93px;overflow:hidden">
<div class="t" style="left:4.20px;top:3.10px;font-size:8.3px;color:#000;transform:scaleX(0.8740);transform-origin:0 0;">1...</div>
</div>
<svg class="a" style="left:2.7px;top:376.69px" width="11.5" height="11.5" viewBox="0 0 11.5 11.5"><defs><radialGradient id="g13" cx="50%" cy="55%" r="55%"><stop offset="0" stop-color="#9ef39a"/><stop offset=".7" stop-color="#58dc52"/><stop offset="1" stop-color="#32b030"/></radialGradient></defs><circle cx="5.75" cy="5.75" r="5.45" fill="url(#g13)"/><path d="M4.9 3.0L7.7 5.2L4.9 7.4Z" fill="#3a3040"/></svg>
<div class="t" style="left:14.70px;top:379.59px;font-size:8.3px;color:#000;transform:scaleX(0.8740);transform-origin:0 0;">Vip Net 2 2016</div>
<div class="a" style="left:306.3px;top:376.49px;width:113.0px;height:13.93px;overflow:hidden">
<div class="t" style="left:4.20px;top:3.10px;font-size:8.3px;color:#000;transform:scaleX(0.8740);transform-origin:0 0;">121010404643.</div>
</div>
<div class="a" style="left:420.3px;top:376.49px;width:15.899999999999977px;height:13.93px;overflow:hidden">
<div class="t" style="left:4.20px;top:3.10px;font-size:8.3px;color:#000;transform:scaleX(0.8740);transform-origin:0 0;">0...</div>
</div>
<div class="t" style="left:521.70px;top:379.59px;font-size:8.3px;color:#000;transform:scaleX(0.8740);transform-origin:0 0;">306 296,88</div>
<div class="t" style="left:566.23px;top:379.59px;font-size:8.3px;color:#000;transform:scaleX(0.8740);transform-origin:0 0;">306 296...</div>
<div class="a" style="left:601.5px;top:376.49px;width:16.700000000000045px;height:13.93px;overflow:hidden">
<div class="t" style="left:4.20px;top:3.10px;font-size:8.3px;color:#000;transform:scaleX(0.8740);transform-origin:0 0;">0...</div>
</div>
<div class="a" style="left:619.2px;top:376.49px;width:122.0px;height:13.93px;overflow:hidden">
<div class="t" style="left:4.20px;top:3.10px;font-size:8.3px;color:#000;transform:scaleX(0.8740);transform-origin:0 0;">Расторгуев Денис Юрьевич</div>
</div>
<div class="a" style="left:742.2px;top:376.49px;width:16.399999999999977px;height:13.93px;overflow:hidden">
<div class="t" style="left:4.20px;top:3.10px;font-size:8.3px;color:#000;transform:scaleX(0.8740);transform-origin:0 0;">4</div>
</div>
<div class="a" style="left:759.6px;top:376.49px;width:15.899999999999977px;height:13.93px;overflow:hidden">
<div class="t" style="left:4.20px;top:3.10px;font-size:8.3px;color:#000;transform:scaleX(0.8740);transform-origin:0 0;">1...</div>
</div>
<div class="a" style="left:776.5px;top:376.49px;width:44.89999999999998px;height:13.93px;overflow:hidden">
<div class="t" style="left:4.20px;top:3.10px;font-size:8.3px;color:#000;transform:scaleX(0.8740);transform-origin:0 0;">12.07.2016</div>
</div>
<div class="a" style="left:822.4px;top:376.49px;width:16.0px;height:13.93px;overflow:hidden">
<div class="t" style="left:4.20px;top:3.10px;font-size:8.3px;color:#000;transform:scaleX(0.8740);transform-origin:0 0;">1...</div>
</div>
<div class="a" style="left:1004.9px;top:376.49px;width:15.899999999999977px;height:13.93px;overflow:hidden">
<div class="t" style="left:4.20px;top:3.10px;font-size:8.3px;color:#000;transform:scaleX(0.8740);transform-origin:0 0;">А...</div>
</div>
<div class="a" style="left:1021.8px;top:376.49px;width:16.700000000000045px;height:13.93px;overflow:hidden">
<div class="t" style="left:4.20px;top:3.10px;font-size:8.3px;color:#000;transform:scaleX(0.8740);transform-origin:0 0;">1</div>
</div>
<div class="a" style="left:1039.5px;top:376.49px;width:16.299999999999955px;height:13.93px;overflow:hidden">
<div class="t" style="left:4.20px;top:3.10px;font-size:8.3px;color:#000;transform:scaleX(0.8740);transform-origin:0 0;">36</div>
</div>
<div class="a" style="left:1056.8px;top:376.49px;width:16.100000000000136px;height:13.93px;overflow:hidden">
<div class="t" style="left:4.20px;top:3.10px;font-size:8.3px;color:#000;transform:scaleX(0.8740);transform-origin:0 0;">1...</div>
</div>
<svg class="a" style="left:2.7px;top:390.61999999999995px" width="11.5" height="11.5" viewBox="0 0 11.5 11.5"><defs><radialGradient id="g14" cx="50%" cy="55%" r="55%"><stop offset="0" stop-color="#9ef39a"/><stop offset=".7" stop-color="#58dc52"/><stop offset="1" stop-color="#32b030"/></radialGradient></defs><circle cx="5.75" cy="5.75" r="5.45" fill="url(#g14)"/><path d="M4.9 3.0L7.7 5.2L4.9 7.4Z" fill="#3a3040"/></svg>
<div class="t" style="left:14.70px;top:393.52px;font-size:8.3px;color:#000;transform:scaleX(0.8740);transform-origin:0 0;">Автоматический анализатор глюкозы Энзискан Ультра</div>
<div class="a" style="left:306.3px;top:390.41999999999996px;width:113.0px;height:13.93px;overflow:hidden">
<div class="t" style="left:4.20px;top:3.10px;font-size:8.3px;color:#000;transform:scaleX(0.8740);transform-origin:0 0;">121013402019</div>
</div>
<div class="a" style="left:420.3px;top:390.41999999999996px;width:15.899999999999977px;height:13.93px;overflow:hidden">
<div class="t" style="left:4.20px;top:3.10px;font-size:8.3px;color:#000;transform:scaleX(0.8740);transform-origin:0 0;">0...</div>
</div>
<div class="t" style="left:521.70px;top:393.52px;font-size:8.3px;color:#000;transform:scaleX(0.8740);transform-origin:0 0;">150 000,00</div>
<div class="t" style="left:566.23px;top:393.52px;font-size:8.3px;color:#000;transform:scaleX(0.8740);transform-origin:0 0;">83 928,55</div>
<div class="a" style="left:601.5px;top:390.41999999999996px;width:16.700000000000045px;height:13.93px;overflow:hidden">
<div class="t" style="left:4.20px;top:3.10px;font-size:8.3px;color:#000;transform:scaleX(0.8740);transform-origin:0 0;">6...</div>
</div>
<div class="a" style="left:619.2px;top:390.41999999999996px;width:122.0px;height:13.93px;overflow:hidden">
<div class="t" style="left:4.20px;top:3.10px;font-size:8.3px;color:#000;transform:scaleX(0.8740);transform-origin:0 0;">Казанцева Ирина Владимировна</div>
</div>
<div class="a" style="left:742.2px;top:390.41999999999996px;width:16.399999999999977px;height:13.93px;overflow:hidden">
<div class="t" style="left:4.20px;top:3.10px;font-size:8.3px;color:#000;transform:scaleX(0.8740);transform-origin:0 0;">2</div>
</div>
<div class="a" style="left:759.6px;top:390.41999999999996px;width:15.899999999999977px;height:13.93px;overflow:hidden">
<div class="t" style="left:4.20px;top:3.10px;font-size:8.3px;color:#000;transform:scaleX(0.8740);transform-origin:0 0;">1...</div>
</div>
<div class="a" style="left:776.5px;top:390.41999999999996px;width:44.89999999999998px;height:13.93px;overflow:hidden">
<div class="t" style="left:4.20px;top:3.10px;font-size:8.3px;color:#000;transform:scaleX(0.8740);transform-origin:0 0;">06.10.2021</div>
</div>
<div class="a" style="left:822.4px;top:390.41999999999996px;width:16.0px;height:13.93px;overflow:hidden">
<div class="t" style="left:4.20px;top:3.10px;font-size:8.3px;color:#000;transform:scaleX(0.8740);transform-origin:0 0;">1...</div>
</div>
<div class="a" style="left:1004.9px;top:390.41999999999996px;width:15.899999999999977px;height:13.93px;overflow:hidden">
<div class="t" style="left:4.20px;top:3.10px;font-size:8.3px;color:#000;transform:scaleX(0.8740);transform-origin:0 0;">Дет</div>
</div>
<div class="a" style="left:1021.8px;top:390.41999999999996px;width:16.700000000000045px;height:13.93px;overflow:hidden">
<div class="t" style="left:4.20px;top:3.10px;font-size:8.3px;color:#000;transform:scaleX(0.8740);transform-origin:0 0;">1</div>
</div>
<div class="a" style="left:1039.5px;top:390.41999999999996px;width:16.299999999999955px;height:13.93px;overflow:hidden">
<div class="t" style="left:4.20px;top:3.10px;font-size:8.3px;color:#000;transform:scaleX(0.8740);transform-origin:0 0;">84</div>
</div>
<div class="a" style="left:1056.8px;top:390.41999999999996px;width:16.100000000000136px;height:13.93px;overflow:hidden">
<div class="t" style="left:4.20px;top:3.10px;font-size:8.3px;color:#000;transform:scaleX(0.8740);transform-origin:0 0;">3...</div>
</div>
<div class="a" style="left:1073.9px;top:390.41999999999996px;width:15.799999999999955px;height:13.93px;overflow:hidden">
<div class="t" style="left:4.20px;top:3.10px;font-size:8.3px;color:#000;transform:scaleX(0.8740);transform-origin:0 0;">2...</div>
</div>
<div class="a" style="left:1090.7px;top:390.41999999999996px;width:16.799999999999955px;height:13.93px;overflow:hidden">
<div class="t" style="left:4.20px;top:3.10px;font-size:8.3px;color:#000;transform:scaleX(0.8740);transform-origin:0 0;">0...</div>
</div>
<svg class="a" style="left:2.7px;top:404.55px" width="11.5" height="11.5" viewBox="0 0 11.5 11.5"><defs><radialGradient id="g15" cx="50%" cy="55%" r="55%"><stop offset="0" stop-color="#9ef39a"/><stop offset=".7" stop-color="#58dc52"/><stop offset="1" stop-color="#32b030"/></radialGradient></defs><circle cx="5.75" cy="5.75" r="5.45" fill="url(#g15)"/><path d="M4.9 3.0L7.7 5.2L4.9 7.4Z" fill="#3a3040"/></svg>
<div class="t" style="left:14.70px;top:407.45px;font-size:8.3px;color:#000;transform:scaleX(0.8740);transform-origin:0 0;">Автоматический анализатор для иммуноферментного анализатора 2019</div>
<div class="a" style="left:306.3px;top:404.35px;width:113.0px;height:13.93px;overflow:hidden">
<div class="t" style="left:4.20px;top:3.10px;font-size:8.3px;color:#000;transform:scaleX(0.8740);transform-origin:0 0;">121012402113</div>
</div>
<div class="a" style="left:420.3px;top:404.35px;width:15.899999999999977px;height:13.93px;overflow:hidden">
<div class="t" style="left:4.20px;top:3.10px;font-size:8.3px;color:#000;transform:scaleX(0.8740);transform-origin:0 0;">0...</div>
</div>
<div class="t" style="left:515.65px;top:407.45px;font-size:8.3px;color:#000;transform:scaleX(0.8740);transform-origin:0 0;">2 885 000,00</div>
<div class="t" style="left:568.25px;top:407.45px;font-size:8.3px;color:#000;transform:scaleX(0.8740);transform-origin:0 0;">2 885 0...</div>
<div class="a" style="left:601.5px;top:404.35px;width:16.700000000000045px;height:13.93px;overflow:hidden">
<div class="t" style="left:4.20px;top:3.10px;font-size:8.3px;color:#000;transform:scaleX(0.8740);transform-origin:0 0;">0...</div>
</div>
<div class="a" style="left:619.2px;top:404.35px;width:122.0px;height:13.93px;overflow:hidden">
<div class="t" style="left:4.20px;top:3.10px;font-size:8.3px;color:#000;transform:scaleX(0.8740);transform-origin:0 0;">Федулова Марина Анатольевна</div>
</div>
<div class="a" style="left:742.2px;top:404.35px;width:16.399999999999977px;height:13.93px;overflow:hidden">
<div class="t" style="left:4.20px;top:3.10px;font-size:8.3px;color:#000;transform:scaleX(0.8740);transform-origin:0 0;">2</div>
</div>
<div class="a" style="left:759.6px;top:404.35px;width:15.899999999999977px;height:13.93px;overflow:hidden">
<div class="t" style="left:4.20px;top:3.10px;font-size:8.3px;color:#000;transform:scaleX(0.8740);transform-origin:0 0;">1...</div>
</div>
<div class="a" style="left:776.5px;top:404.35px;width:44.89999999999998px;height:13.93px;overflow:hidden">
<div class="t" style="left:4.20px;top:3.10px;font-size:8.3px;color:#000;transform:scaleX(0.8740);transform-origin:0 0;">02.07.2019</div>
</div>
<div class="a" style="left:822.4px;top:404.35px;width:16.0px;height:13.93px;overflow:hidden">
<div class="t" style="left:4.20px;top:3.10px;font-size:8.3px;color:#000;transform:scaleX(0.8740);transform-origin:0 0;">1...</div>
</div>
<div class="a" style="left:839.4px;top:404.35px;width:164.5px;height:13.93px;overflow:hidden">
<div class="t" style="left:4.20px;top:3.10px;font-size:8.3px;color:#000;transform:scaleX(0.8740);transform-origin:0 0;">54001252001319</div>
</div>
<div class="a" style="left:1004.9px;top:404.35px;width:15.899999999999977px;height:13.93px;overflow:hidden">
<div class="t" style="left:4.20px;top:3.10px;font-size:8.3px;color:#000;transform:scaleX(0.8740);transform-origin:0 0;">К...</div>
</div>
<div class="a" style="left:1021.8px;top:404.35px;width:16.700000000000045px;height:13.93px;overflow:hidden">
<div class="t" style="left:4.20px;top:3.10px;font-size:8.3px;color:#000;transform:scaleX(0.8740);transform-origin:0 0;">1</div>
</div>
<div class="a" style="left:1039.5px;top:404.35px;width:16.299999999999955px;height:13.93px;overflow:hidden">
<div class="t" style="left:4.20px;top:3.10px;font-size:8.3px;color:#000;transform:scaleX(0.8740);transform-origin:0 0;">60</div>
</div>
<div class="a" style="left:1056.8px;top:404.35px;width:16.100000000000136px;height:13.93px;overflow:hidden">
<div class="t" style="left:4.20px;top:3.10px;font-size:8.3px;color:#000;transform:scaleX(0.8740);transform-origin:0 0;">3...</div>
</div>
<div class="a" style="left:1073.9px;top:404.35px;width:15.799999999999955px;height:13.93px;overflow:hidden">
<div class="t" style="left:4.20px;top:3.10px;font-size:8.3px;color:#000;transform:scaleX(0.8740);transform-origin:0 0;">6...</div>
</div>
<svg class="a" style="left:2.7px;top:418.47999999999996px" width="11.5" height="11.5" viewBox="0 0 11.5 11.5"><defs><radialGradient id="g16" cx="50%" cy="55%" r="55%"><stop offset="0" stop-color="#9ef39a"/><stop offset=".7" stop-color="#58dc52"/><stop offset="1" stop-color="#32b030"/></radialGradient></defs><circle cx="5.75" cy="5.75" r="5.45" fill="url(#g16)"/><path d="M4.9 3.0L7.7 5.2L4.9 7.4Z" fill="#3a3040"/></svg>
<div class="t" style="left:14.70px;top:421.38px;font-size:8.3px;color:#000;transform:scaleX(0.8740);transform-origin:0 0;">Автоматический гематологический анализат</div>
<div class="a" style="left:306.3px;top:418.28px;width:113.0px;height:13.93px;overflow:hidden">
<div class="t" style="left:4.20px;top:3.10px;font-size:8.3px;color:#000;transform:scaleX(0.8740);transform-origin:0 0;">CO2101060610</div>
</div>
<div class="a" style="left:420.3px;top:418.28px;width:15.899999999999977px;height:13.93px;overflow:hidden">
<div class="t" style="left:4.20px;top:3.10px;font-size:8.3px;color:#000;transform:scaleX(0.8740);transform-origin:0 0;">0...</div>
</div>
<div class="t" style="left:521.70px;top:421.38px;font-size:8.3px;color:#000;transform:scaleX(0.8740);transform-origin:0 0;">398 000,00</div>
<div class="t" style="left:566.23px;top:421.38px;font-size:8.3px;color:#000;transform:scaleX(0.8740);transform-origin:0 0;">398 000...</div>
<div class="a" style="left:601.5px;top:418.28px;width:16.700000000000045px;height:13.93px;overflow:hidden">
<div class="t" style="left:4.20px;top:3.10px;font-size:8.3px;color:#000;transform:scaleX(0.8740);transform-origin:0 0;">0...</div>
</div>
<div class="a" style="left:619.2px;top:418.28px;width:122.0px;height:13.93px;overflow:hidden">
<div class="t" style="left:4.20px;top:3.10px;font-size:8.3px;color:#000;transform:scaleX(0.8740);transform-origin:0 0;">Волкова Лариса Викторовна</div>
</div>
<div class="a" style="left:742.2px;top:418.28px;width:16.399999999999977px;height:13.93px;overflow:hidden">
<div class="t" style="left:4.20px;top:3.10px;font-size:8.3px;color:#000;transform:scaleX(0.8740);transform-origin:0 0;">4</div>
</div>
<div class="a" style="left:759.6px;top:418.28px;width:15.899999999999977px;height:13.93px;overflow:hidden">
<div class="t" style="left:4.20px;top:3.10px;font-size:8.3px;color:#000;transform:scaleX(0.8740);transform-origin:0 0;">1...</div>
</div>
<div class="a" style="left:776.5px;top:418.28px;width:44.89999999999998px;height:13.93px;overflow:hidden">
<div class="t" style="left:4.20px;top:3.10px;font-size:8.3px;color:#000;transform:scaleX(0.8740);transform-origin:0 0;">30.11.2011</div>
</div>
<div class="a" style="left:822.4px;top:418.28px;width:16.0px;height:13.93px;overflow:hidden">
<div class="t" style="left:4.20px;top:3.10px;font-size:8.3px;color:#000;transform:scaleX(0.8740);transform-origin:0 0;">1...</div>
</div>
<div class="a" style="left:839.4px;top:418.28px;width:164.5px;height:13.93px;overflow:hidden">
<div class="t" style="left:4.20px;top:3.10px;font-size:8.3px;color:#000;transform:scaleX(0.8740);transform-origin:0 0;">54001252000016</div>
</div>
<div class="a" style="left:1004.9px;top:418.28px;width:15.899999999999977px;height:13.93px;overflow:hidden">
<div class="t" style="left:4.20px;top:3.10px;font-size:8.3px;color:#000;transform:scaleX(0.8740);transform-origin:0 0;">Пол</div>
</div>
<div class="a" style="left:1021.8px;top:418.28px;width:16.700000000000045px;height:13.93px;overflow:hidden">
<div class="t" style="left:4.20px;top:3.10px;font-size:8.3px;color:#000;transform:scaleX(0.8740);transform-origin:0 0;">1</div>
</div>
<div class="a" style="left:1039.5px;top:418.28px;width:16.299999999999955px;height:13.93px;overflow:hidden">
<div class="t" style="left:4.20px;top:3.10px;font-size:8.3px;color:#000;transform:scaleX(0.8740);transform-origin:0 0;">84</div>
</div>
<div class="a" style="left:1056.8px;top:418.28px;width:16.100000000000136px;height:13.93px;overflow:hidden">
<div class="t" style="left:4.20px;top:3.10px;font-size:8.3px;color:#000;transform:scaleX(0.8740);transform-origin:0 0;">1...</div>
</div>
<div class="a" style="left:1073.9px;top:418.28px;width:15.799999999999955px;height:13.93px;overflow:hidden">
<div class="t" style="left:4.20px;top:3.10px;font-size:8.3px;color:#000;transform:scaleX(0.8740);transform-origin:0 0;">2...</div>
</div>
<svg class="a" style="left:2.7px;top:432.41px" width="11.5" height="11.5" viewBox="0 0 11.5 11.5"><defs><radialGradient id="g17" cx="50%" cy="55%" r="55%"><stop offset="0" stop-color="#9ef39a"/><stop offset=".7" stop-color="#58dc52"/><stop offset="1" stop-color="#32b030"/></radialGradient></defs><circle cx="5.75" cy="5.75" r="5.45" fill="url(#g17)"/><path d="M4.9 3.0L7.7 5.2L4.9 7.4Z" fill="#3a3040"/></svg>
<div class="t" style="left:14.70px;top:435.31px;font-size:8.3px;color:#000;transform:scaleX(0.8740);transform-origin:0 0;">Автоматический гематологический анализат</div>
<div class="a" style="left:306.3px;top:432.21000000000004px;width:113.0px;height:13.93px;overflow:hidden">
<div class="t" style="left:4.20px;top:3.10px;font-size:8.3px;color:#000;transform:scaleX(0.8740);transform-origin:0 0;">121010400492</div>
</div>
<div class="a" style="left:420.3px;top:432.21000000000004px;width:15.899999999999977px;height:13.93px;overflow:hidden">
<div class="t" style="left:4.20px;top:3.10px;font-size:8.3px;color:#000;transform:scaleX(0.8740);transform-origin:0 0;">0...</div>
</div>
<div class="t" style="left:521.70px;top:435.31px;font-size:8.3px;color:#000;transform:scaleX(0.8740);transform-origin:0 0;">348 020,00</div>
<div class="t" style="left:566.23px;top:435.31px;font-size:8.3px;color:#000;transform:scaleX(0.8740);transform-origin:0 0;">348 020...</div>
<div class="a" style="left:601.5px;top:432.21000000000004px;width:16.700000000000045px;height:13.93px;overflow:hidden">
<div class="t" style="left:4.20px;top:3.10px;font-size:8.3px;color:#000;transform:scaleX(0.8740);transform-origin:0 0;">0...</div>
</div>
<div class="a" style="left:619.2px;top:432.21000000000004px;width:122.0px;height:13.93px;overflow:hidden">
<div class="t" style="left:4.20px;top:3.10px;font-size:8.3px;color:#000;transform:scaleX(0.8740);transform-origin:0 0;">Волкова Лариса Викторовна</div>
</div>
<div class="a" style="left:742.2px;top:432.21000000000004px;width:16.399999999999977px;height:13.93px;overflow:hidden">
<div class="t" style="left:4.20px;top:3.10px;font-size:8.3px;color:#000;transform:scaleX(0.8740);transform-origin:0 0;">4</div>
</div>
<div class="a" style="left:759.6px;top:432.21000000000004px;width:15.899999999999977px;height:13.93px;overflow:hidden">
<div class="t" style="left:4.20px;top:3.10px;font-size:8.3px;color:#000;transform:scaleX(0.8740);transform-origin:0 0;">1...</div>
</div>
<div class="a" style="left:776.5px;top:432.21000000000004px;width:44.89999999999998px;height:13.93px;overflow:hidden">
<div class="t" style="left:4.20px;top:3.10px;font-size:8.3px;color:#000;transform:scaleX(0.8740);transform-origin:0 0;">01.01.2014</div>
</div>
<div class="a" style="left:822.4px;top:432.21000000000004px;width:16.0px;height:13.93px;overflow:hidden">
<div class="t" style="left:4.20px;top:3.10px;font-size:8.3px;color:#000;transform:scaleX(0.8740);transform-origin:0 0;">1...</div>
</div>
<div class="a" style="left:839.4px;top:432.21000000000004px;width:164.5px;height:13.93px;overflow:hidden">
<div class="t" style="left:4.20px;top:3.10px;font-size:8.3px;color:#000;transform:scaleX(0.8740);transform-origin:0 0;">54001252000015</div>
</div>
<div class="a" style="left:1004.9px;top:432.21000000000004px;width:15.899999999999977px;height:13.93px;overflow:hidden">
<div class="t" style="left:4.20px;top:3.10px;font-size:8.3px;color:#000;transform:scaleX(0.8740);transform-origin:0 0;">Пол</div>
</div>
<div class="a" style="left:1021.8px;top:432.21000000000004px;width:16.700000000000045px;height:13.93px;overflow:hidden">
<div class="t" style="left:4.20px;top:3.10px;font-size:8.3px;color:#000;transform:scaleX(0.8740);transform-origin:0 0;">1</div>
</div>
<div class="a" style="left:1039.5px;top:432.21000000000004px;width:16.299999999999955px;height:13.93px;overflow:hidden">
<div class="t" style="left:4.20px;top:3.10px;font-size:8.3px;color:#000;transform:scaleX(0.8740);transform-origin:0 0;">84</div>
</div>
<div class="a" style="left:1056.8px;top:432.21000000000004px;width:16.100000000000136px;height:13.93px;overflow:hidden">
<div class="t" style="left:4.20px;top:3.10px;font-size:8.3px;color:#000;transform:scaleX(0.8740);transform-origin:0 0;">1...</div>
</div>
<div class="a" style="left:1073.9px;top:432.21000000000004px;width:15.799999999999955px;height:13.93px;overflow:hidden">
<div class="t" style="left:4.20px;top:3.10px;font-size:8.3px;color:#000;transform:scaleX(0.8740);transform-origin:0 0;">2...</div>
</div>
<svg class="a" style="left:2.7px;top:446.34px" width="11.5" height="11.5" viewBox="0 0 11.5 11.5"><defs><radialGradient id="g18" cx="50%" cy="55%" r="55%"><stop offset="0" stop-color="#9ef39a"/><stop offset=".7" stop-color="#58dc52"/><stop offset="1" stop-color="#32b030"/></radialGradient></defs><circle cx="5.75" cy="5.75" r="5.45" fill="url(#g18)"/><path d="M4.9 3.0L7.7 5.2L4.9 7.4Z" fill="#3a3040"/></svg>
<div class="t" style="left:14.70px;top:449.24px;font-size:8.3px;color:#000;transform:scaleX(0.8740);transform-origin:0 0;">Автоматический гематологический анализатор MicroCC-20Plus</div>
<div class="a" style="left:306.3px;top:446.14px;width:113.0px;height:13.93px;overflow:hidden">
<div class="t" style="left:4.20px;top:3.10px;font-size:8.3px;color:#000;transform:scaleX(0.8740);transform-origin:0 0;">0000000646</div>
</div>
<div class="a" style="left:420.3px;top:446.14px;width:15.899999999999977px;height:13.93px;overflow:hidden">
<div class="t" style="left:4.20px;top:3.10px;font-size:8.3px;color:#000;transform:scaleX(0.8740);transform-origin:0 0;">0...</div>
</div>
<div class="t" style="left:521.70px;top:449.24px;font-size:8.3px;color:#000;transform:scaleX(0.8740);transform-origin:0 0;">152 000,00</div>
<div class="t" style="left:566.23px;top:449.24px;font-size:8.3px;color:#000;transform:scaleX(0.8740);transform-origin:0 0;">152 000...</div>
<div class="a" style="left:601.5px;top:446.14px;width:16.700000000000045px;height:13.93px;overflow:hidden">
<div class="t" style="left:4.20px;top:3.10px;font-size:8.3px;color:#000;transform:scaleX(0.8740);transform-origin:0 0;">0...</div>
</div>
<div class="a" style="left:619.2px;top:446.14px;width:122.0px;height:13.93px;overflow:hidden">
<div class="t" style="left:4.20px;top:3.10px;font-size:8.3px;color:#000;transform:scaleX(0.8740);transform-origin:0 0;">Федулова Марина Анатольевна</div>
</div>
<div class="a" style="left:742.2px;top:446.14px;width:16.399999999999977px;height:13.93px;overflow:hidden">
<div class="t" style="left:4.20px;top:3.10px;font-size:8.3px;color:#000;transform:scaleX(0.8740);transform-origin:0 0;">2</div>
</div>
<div class="a" style="left:759.6px;top:446.14px;width:15.899999999999977px;height:13.93px;overflow:hidden">
<div class="t" style="left:4.20px;top:3.10px;font-size:8.3px;color:#000;transform:scaleX(0.8740);transform-origin:0 0;">1...</div>
</div>
<div class="a" style="left:776.5px;top:446.14px;width:44.89999999999998px;height:13.93px;overflow:hidden">
<div class="t" style="left:4.20px;top:3.10px;font-size:8.3px;color:#000;transform:scaleX(0.8740);transform-origin:0 0;">09.01.2017</div>
</div>
<div class="a" style="left:822.4px;top:446.14px;width:16.0px;height:13.93px;overflow:hidden">
<div class="t" style="left:4.20px;top:3.10px;font-size:8.3px;color:#000;transform:scaleX(0.8740);transform-origin:0 0;">1...</div>
</div>
<div class="a" style="left:839.4px;top:446.14px;width:164.5px;height:13.93px;overflow:hidden">
<div class="t" style="left:4.20px;top:3.10px;font-size:8.3px;color:#000;transform:scaleX(0.8740);transform-origin:0 0;">54001252001253</div>
</div>
<div class="a" style="left:1004.9px;top:446.14px;width:15.899999999999977px;height:13.93px;overflow:hidden">
<div class="t" style="left:4.20px;top:3.10px;font-size:8.3px;color:#000;transform:scaleX(0.8740);transform-origin:0 0;">К...</div>
</div>
<div class="a" style="left:1021.8px;top:446.14px;width:16.700000000000045px;height:13.93px;overflow:hidden">
<div class="t" style="left:4.20px;top:3.10px;font-size:8.3px;color:#000;transform:scaleX(0.8740);transform-origin:0 0;">1</div>
</div>
<div class="a" style="left:1039.5px;top:446.14px;width:16.299999999999955px;height:13.93px;overflow:hidden">
<div class="t" style="left:4.20px;top:3.10px;font-size:8.3px;color:#000;transform:scaleX(0.8740);transform-origin:0 0;">84</div>
</div>
<div class="a" style="left:1056.8px;top:446.14px;width:16.100000000000136px;height:13.93px;overflow:hidden">
<div class="t" style="left:4.20px;top:3.10px;font-size:8.3px;color:#000;transform:scaleX(0.8740);transform-origin:0 0;">3...</div>
</div>
<div class="a" style="left:1073.9px;top:446.14px;width:15.799999999999955px;height:13.93px;overflow:hidden">
<div class="t" style="left:4.20px;top:3.10px;font-size:8.3px;color:#000;transform:scaleX(0.8740);transform-origin:0 0;">8...</div>
</div>
<svg class="a" style="left:2.7px;top:460.27000000000004px" width="11.5" height="11.5" viewBox="0 0 11.5 11.5"><defs><radialGradient id="g19" cx="50%" cy="55%" r="55%"><stop offset="0" stop-color="#9ef39a"/><stop offset=".7" stop-color="#58dc52"/><stop offset="1" stop-color="#32b030"/></radialGradient></defs><circle cx="5.75" cy="5.75" r="5.45" fill="url(#g19)"/><path d="M4.9 3.0L7.7 5.2L4.9 7.4Z" fill="#3a3040"/></svg>
<div class="t" style="left:14.70px;top:463.17px;font-size:8.3px;color:#000;transform:scaleX(0.8740);transform-origin:0 0;">Автоматический гемотологический анализат</div>
<div class="a" style="left:306.3px;top:460.07000000000005px;width:113.0px;height:13.93px;overflow:hidden">
<div class="t" style="left:4.20px;top:3.10px;font-size:8.3px;color:#000;transform:scaleX(0.8740);transform-origin:0 0;">Ц000000059</div>
</div>
<div class="a" style="left:420.3px;top:460.07000000000005px;width:15.899999999999977px;height:13.93px;overflow:hidden">
<div class="t" style="left:4.20px;top:3.10px;font-size:8.3px;color:#000;transform:scaleX(0.8740);transform-origin:0 0;">0...</div>
</div>
<div class="t" style="left:521.70px;top:463.17px;font-size:8.3px;color:#000;transform:scaleX(0.8740);transform-origin:0 0;">184 500,00</div>
<div class="t" style="left:566.23px;top:463.17px;font-size:8.3px;color:#000;transform:scaleX(0.8740);transform-origin:0 0;">184 500...</div>
<div class="a" style="left:601.5px;top:460.07000000000005px;width:16.700000000000045px;height:13.93px;overflow:hidden">
<div class="t" style="left:4.20px;top:3.10px;font-size:8.3px;color:#000;transform:scaleX(0.8740);transform-origin:0 0;">0...</div>
</div>
<div class="a" style="left:619.2px;top:460.07000000000005px;width:122.0px;height:13.93px;overflow:hidden">
<div class="t" style="left:4.20px;top:3.10px;font-size:8.3px;color:#000;transform:scaleX(0.8740);transform-origin:0 0;">Казанцева Ирина Владимировна</div>
</div>
<div class="a" style="left:742.2px;top:460.07000000000005px;width:16.399999999999977px;height:13.93px;overflow:hidden">
<div class="t" style="left:4.20px;top:3.10px;font-size:8.3px;color:#000;transform:scaleX(0.8740);transform-origin:0 0;">4</div>
</div>
<div class="a" style="left:759.6px;top:460.07000000000005px;width:15.899999999999977px;height:13.93px;overflow:hidden">
<div class="t" style="left:4.20px;top:3.10px;font-size:8.3px;color:#000;transform:scaleX(0.8740);transform-origin:0 0;">1...</div>
</div>
<div class="a" style="left:776.5px;top:460.07000000000005px;width:44.89999999999998px;height:13.93px;overflow:hidden">
<div class="t" style="left:4.20px;top:3.10px;font-size:8.3px;color:#000;transform:scaleX(0.8740);transform-origin:0 0;">01.07.2013</div>
</div>
<div class="a" style="left:822.4px;top:460.07000000000005px;width:16.0px;height:13.93px;overflow:hidden">
<div class="t" style="left:4.20px;top:3.10px;font-size:8.3px;color:#000;transform:scaleX(0.8740);transform-origin:0 0;">1...</div>
</div>
<div class="a" style="left:839.4px;top:460.07000000000005px;width:164.5px;height:13.93px;overflow:hidden">
<div class="t" style="left:4.20px;top:3.10px;font-size:8.3px;color:#000;transform:scaleX(0.8740);transform-origin:0 0;">54001252001074</div>
</div>
<div class="a" style="left:1004.9px;top:460.07000000000005px;width:15.899999999999977px;height:13.93px;overflow:hidden">
<div class="t" style="left:4.20px;top:3.10px;font-size:8.3px;color:#000;transform:scaleX(0.8740);transform-origin:0 0;">Дет</div>
</div>
<div class="a" style="left:1021.8px;top:460.07000000000005px;width:16.700000000000045px;height:13.93px;overflow:hidden">
<div class="t" style="left:4.20px;top:3.10px;font-size:8.3px;color:#000;transform:scaleX(0.8740);transform-origin:0 0;">1</div>
</div>
<div class="a" style="left:1039.5px;top:460.07000000000005px;width:16.299999999999955px;height:13.93px;overflow:hidden">
<div class="t" style="left:4.20px;top:3.10px;font-size:8.3px;color:#000;transform:scaleX(0.8740);transform-origin:0 0;">84</div>
</div>
<div class="a" style="left:1056.8px;top:460.07000000000005px;width:16.100000000000136px;height:13.93px;overflow:hidden">
<div class="t" style="left:4.20px;top:3.10px;font-size:8.3px;color:#000;transform:scaleX(0.8740);transform-origin:0 0;">1...</div>
</div>
<svg class="a" style="left:2.7px;top:474.2px" width="11.5" height="11.5" viewBox="0 0 11.5 11.5"><defs><radialGradient id="g20" cx="50%" cy="55%" r="55%"><stop offset="0" stop-color="#9ef39a"/><stop offset=".7" stop-color="#58dc52"/><stop offset="1" stop-color="#32b030"/></radialGradient></defs><circle cx="5.75" cy="5.75" r="5.45" fill="url(#g20)"/><path d="M4.9 3.0L7.7 5.2L4.9 7.4Z" fill="#3a3040"/></svg>
<div class="t" style="left:14.70px;top:477.10px;font-size:8.3px;color:#000;transform:scaleX(0.8740);transform-origin:0 0;">Авторефкератометр HRK-1 2020</div>
<div class="a" style="left:306.3px;top:474.0px;width:113.0px;height:13.93px;overflow:hidden">
<div class="t" style="left:4.20px;top:3.10px;font-size:8.3px;color:#000;transform:scaleX(0.8740);transform-origin:0 0;">121012404415</div>
</div>
<div class="a" style="left:420.3px;top:474.0px;width:15.899999999999977px;height:13.93px;overflow:hidden">
<div class="t" style="left:4.20px;top:3.10px;font-size:8.3px;color:#000;transform:scaleX(0.8740);transform-origin:0 0;">0...</div>
</div>
<div class="t" style="left:521.70px;top:477.10px;font-size:8.3px;color:#000;transform:scaleX(0.8740);transform-origin:0 0;">408 200,00</div>
<div class="t" style="left:566.23px;top:477.10px;font-size:8.3px;color:#000;transform:scaleX(0.8740);transform-origin:0 0;">301 290...</div>
<div class="a" style="left:601.5px;top:474.0px;width:16.700000000000045px;height:13.93px;overflow:hidden">
<div class="t" style="left:4.20px;top:3.10px;font-size:8.3px;color:#000;transform:scaleX(0.8740);transform-origin:0 0;">1...</div>
</div>
<div class="a" style="left:619.2px;top:474.0px;width:122.0px;height:13.93px;overflow:hidden">
<div class="t" style="left:4.20px;top:3.10px;font-size:8.3px;color:#000;transform:scaleX(0.8740);transform-origin:0 0;">Казанцева Ирина Владимировна</div>
</div>
<div class="a" style="left:742.2px;top:474.0px;width:16.399999999999977px;height:13.93px;overflow:hidden">
<div class="t" style="left:4.20px;top:3.10px;font-size:8.3px;color:#000;transform:scaleX(0.8740);transform-origin:0 0;">4</div>
</div>
<div class="a" style="left:759.6px;top:474.0px;width:15.899999999999977px;height:13.93px;overflow:hidden">
<div class="t" style="left:4.20px;top:3.10px;font-size:8.3px;color:#000;transform:scaleX(0.8740);transform-origin:0 0;">1...</div>
</div>
<div class="a" style="left:776.5px;top:474.0px;width:44.89999999999998px;height:13.93px;overflow:hidden">
<div class="t" style="left:4.20px;top:3.10px;font-size:8.3px;color:#000;transform:scaleX(0.8740);transform-origin:0 0;">28.07.2020</div>
</div>
<div class="a" style="left:822.4px;top:474.0px;width:16.0px;height:13.93px;overflow:hidden">
<div class="t" style="left:4.20px;top:3.10px;font-size:8.3px;color:#000;transform:scaleX(0.8740);transform-origin:0 0;">1...</div>
</div>
<div class="a" style="left:839.4px;top:474.0px;width:164.5px;height:13.93px;overflow:hidden">
<div class="t" style="left:4.20px;top:3.10px;font-size:8.3px;color:#000;transform:scaleX(0.8740);transform-origin:0 0;">54001252001391</div>
</div>
<div class="a" style="left:1004.9px;top:474.0px;width:15.899999999999977px;height:13.93px;overflow:hidden">
<div class="t" style="left:4.20px;top:3.10px;font-size:8.3px;color:#000;transform:scaleX(0.8740);transform-origin:0 0;">Дет</div>
</div>
<div class="a" style="left:1021.8px;top:474.0px;width:16.700000000000045px;height:13.93px;overflow:hidden">
<div class="t" style="left:4.20px;top:3.10px;font-size:8.3px;color:#000;transform:scaleX(0.8740);transform-origin:0 0;">1</div>
</div>
<div class="a" style="left:1039.5px;top:474.0px;width:16.299999999999955px;height:13.93px;overflow:hidden">
<div class="t" style="left:4.20px;top:3.10px;font-size:8.3px;color:#000;transform:scaleX(0.8740);transform-origin:0 0;">84</div>
</div>
<div class="a" style="left:1056.8px;top:474.0px;width:16.100000000000136px;height:13.93px;overflow:hidden">
<div class="t" style="left:4.20px;top:3.10px;font-size:8.3px;color:#000;transform:scaleX(0.8740);transform-origin:0 0;">3...</div>
</div>
<div class="a" style="left:1073.9px;top:474.0px;width:15.799999999999955px;height:13.93px;overflow:hidden">
<div class="t" style="left:4.20px;top:3.10px;font-size:8.3px;color:#000;transform:scaleX(0.8740);transform-origin:0 0;">1...</div>
</div>
<div class="a" style="left:1090.7px;top:474.0px;width:16.799999999999955px;height:13.93px;overflow:hidden">
<div class="t" style="left:4.20px;top:3.10px;font-size:8.3px;color:#000;transform:scaleX(0.8740);transform-origin:0 0;">0...</div>
</div>
<svg class="a" style="left:2.7px;top:488.12999999999994px" width="11.5" height="11.5" viewBox="0 0 11.5 11.5"><defs><radialGradient id="g21" cx="50%" cy="55%" r="55%"><stop offset="0" stop-color="#9ef39a"/><stop offset=".7" stop-color="#58dc52"/><stop offset="1" stop-color="#32b030"/></radialGradient></defs><circle cx="5.75" cy="5.75" r="5.45" fill="url(#g21)"/><path d="M4.9 3.0L7.7 5.2L4.9 7.4Z" fill="#3a3040"/></svg>
<div class="t" style="left:14.70px;top:491.03px;font-size:8.3px;color:#000;transform:scaleX(0.8740);transform-origin:0 0;">Авторефрактометр 2012</div>
<div class="a" style="left:306.3px;top:487.92999999999995px;width:113.0px;height:13.93px;overflow:hidden">
<div class="t" style="left:4.20px;top:3.10px;font-size:8.3px;color:#000;transform:scaleX(0.8740);transform-origin:0 0;">12101040526</div>
</div>
<div class="a" style="left:420.3px;top:487.92999999999995px;width:15.899999999999977px;height:13.93px;overflow:hidden">
<div class="t" style="left:4.20px;top:3.10px;font-size:8.3px;color:#000;transform:scaleX(0.8740);transform-origin:0 0;">0...</div>
</div>
<div class="t" style="left:521.70px;top:491.03px;font-size:8.3px;color:#000;transform:scaleX(0.8740);transform-origin:0 0;">346 000,00</div>
<div class="t" style="left:566.23px;top:491.03px;font-size:8.3px;color:#000;transform:scaleX(0.8740);transform-origin:0 0;">346 000...</div>
<div class="a" style="left:601.5px;top:487.92999999999995px;width:16.700000000000045px;height:13.93px;overflow:hidden">
<div class="t" style="left:4.20px;top:3.10px;font-size:8.3px;color:#000;transform:scaleX(0.8740);transform-origin:0 0;">0...</div>
</div>
<div class="a" style="left:619.2px;top:487.92999999999995px;width:122.0px;height:13.93px;overflow:hidden">
<div class="t" style="left:4.20px;top:3.10px;font-size:8.3px;color:#000;transform:scaleX(0.8740);transform-origin:0 0;">Пермякова Елена Валентиновна</div>
</div>
<div class="a" style="left:742.2px;top:487.92999999999995px;width:16.399999999999977px;height:13.93px;overflow:hidden">
<div class="t" style="left:4.20px;top:3.10px;font-size:8.3px;color:#000;transform:scaleX(0.8740);transform-origin:0 0;">4</div>
</div>
<div class="a" style="left:759.6px;top:487.92999999999995px;width:15.899999999999977px;height:13.93px;overflow:hidden">
<div class="t" style="left:4.20px;top:3.10px;font-size:8.3px;color:#000;transform:scaleX(0.8740);transform-origin:0 0;">1...</div>
</div>
<div class="a" style="left:776.5px;top:487.92999999999995px;width:44.89999999999998px;height:13.93px;overflow:hidden">
<div class="t" style="left:4.20px;top:3.10px;font-size:8.3px;color:#000;transform:scaleX(0.8740);transform-origin:0 0;">01.01.2014</div>
</div>
<div class="a" style="left:822.4px;top:487.92999999999995px;width:16.0px;height:13.93px;overflow:hidden">
<div class="t" style="left:4.20px;top:3.10px;font-size:8.3px;color:#000;transform:scaleX(0.8740);transform-origin:0 0;">1...</div>
</div>
<div class="a" style="left:839.4px;top:487.92999999999995px;width:164.5px;height:13.93px;overflow:hidden">
<div class="t" style="left:4.20px;top:3.10px;font-size:8.3px;color:#000;transform:scaleX(0.8740);transform-origin:0 0;">54001252000017</div>
</div>
<div class="a" style="left:1004.9px;top:487.92999999999995px;width:15.899999999999977px;height:13.93px;overflow:hidden">
<div class="t" style="left:4.20px;top:3.10px;font-size:8.3px;color:#000;transform:scaleX(0.8740);transform-origin:0 0;">Пол</div>
</div>
<div class="a" style="left:1021.8px;top:487.92999999999995px;width:16.700000000000045px;height:13.93px;overflow:hidden">
<div class="t" style="left:4.20px;top:3.10px;font-size:8.3px;color:#000;transform:scaleX(0.8740);transform-origin:0 0;">1</div>
</div>
<div class="a" style="left:1039.5px;top:487.92999999999995px;width:16.299999999999955px;height:13.93px;overflow:hidden">
<div class="t" style="left:4.20px;top:3.10px;font-size:8.3px;color:#000;transform:scaleX(0.8740);transform-origin:0 0;">84</div>
</div>
<div class="a" style="left:1056.8px;top:487.92999999999995px;width:16.100000000000136px;height:13.93px;overflow:hidden">
<div class="t" style="left:4.20px;top:3.10px;font-size:8.3px;color:#000;transform:scaleX(0.8740);transform-origin:0 0;">1...</div>
</div>
<div class="a" style="left:1073.9px;top:487.92999999999995px;width:15.799999999999955px;height:13.93px;overflow:hidden">
<div class="t" style="left:4.20px;top:3.10px;font-size:8.3px;color:#000;transform:scaleX(0.8740);transform-origin:0 0;">№ /</div>
</div>
<svg class="a" style="left:2.7px;top:502.06px" width="11.5" height="11.5" viewBox="0 0 11.5 11.5"><defs><radialGradient id="g22" cx="50%" cy="55%" r="55%"><stop offset="0" stop-color="#9ef39a"/><stop offset=".7" stop-color="#58dc52"/><stop offset="1" stop-color="#32b030"/></radialGradient></defs><circle cx="5.75" cy="5.75" r="5.45" fill="url(#g22)"/><path d="M4.9 3.0L7.7 5.2L4.9 7.4Z" fill="#3a3040"/></svg>
<div class="t" style="left:14.70px;top:504.96px;font-size:8.3px;color:#000;transform:scaleX(0.8740);transform-origin:0 0;">Авторефрактометр RMK-200</div>
<div class="a" style="left:306.3px;top:501.86px;width:113.0px;height:13.93px;overflow:hidden">
<div class="t" style="left:4.20px;top:3.10px;font-size:8.3px;color:#000;transform:scaleX(0.8740);transform-origin:0 0;">Ц000000045</div>
</div>
<div class="a" style="left:420.3px;top:501.86px;width:15.899999999999977px;height:13.93px;overflow:hidden">
<div class="t" style="left:4.20px;top:3.10px;font-size:8.3px;color:#000;transform:scaleX(0.8740);transform-origin:0 0;">0...</div>
</div>
<div class="t" style="left:521.70px;top:504.96px;font-size:8.3px;color:#000;transform:scaleX(0.8740);transform-origin:0 0;">159 990,00</div>
<div class="t" style="left:566.23px;top:504.96px;font-size:8.3px;color:#000;transform:scaleX(0.8740);transform-origin:0 0;">159 990...</div>
<div class="a" style="left:601.5px;top:501.86px;width:16.700000000000045px;height:13.93px;overflow:hidden">
<div class="t" style="left:4.20px;top:3.10px;font-size:8.3px;color:#000;transform:scaleX(0.8740);transform-origin:0 0;">0...</div>
</div>
<div class="a" style="left:619.2px;top:501.86px;width:122.0px;height:13.93px;overflow:hidden">
<div class="t" style="left:4.20px;top:3.10px;font-size:8.3px;color:#000;transform:scaleX(0.8740);transform-origin:0 0;">Казанцева Ирина Владимировна</div>
</div>
<div class="a" style="left:742.2px;top:501.86px;width:16.399999999999977px;height:13.93px;overflow:hidden">
<div class="t" style="left:4.20px;top:3.10px;font-size:8.3px;color:#000;transform:scaleX(0.8740);transform-origin:0 0;">4</div>
</div>
<div class="a" style="left:759.6px;top:501.86px;width:15.899999999999977px;height:13.93px;overflow:hidden">
<div class="t" style="left:4.20px;top:3.10px;font-size:8.3px;color:#000;transform:scaleX(0.8740);transform-origin:0 0;">1...</div>
</div>
<div class="a" style="left:776.5px;top:501.86px;width:44.89999999999998px;height:13.93px;overflow:hidden">
<div class="t" style="left:4.20px;top:3.10px;font-size:8.3px;color:#000;transform:scaleX(0.8740);transform-origin:0 0;">06.04.2012</div>
</div>
<div class="a" style="left:822.4px;top:501.86px;width:16.0px;height:13.93px;overflow:hidden">
<div class="t" style="left:4.20px;top:3.10px;font-size:8.3px;color:#000;transform:scaleX(0.8740);transform-origin:0 0;">1...</div>
</div>
<div class="a" style="left:839.4px;top:501.86px;width:164.5px;height:13.93px;overflow:hidden">
<div class="t" style="left:4.20px;top:3.10px;font-size:8.3px;color:#000;transform:scaleX(0.8740);transform-origin:0 0;">54001252000996</div>
</div>
<div class="a" style="left:1004.9px;top:501.86px;width:15.899999999999977px;height:13.93px;overflow:hidden">
<div class="t" style="left:4.20px;top:3.10px;font-size:8.3px;color:#000;transform:scaleX(0.8740);transform-origin:0 0;">Дет</div>
</div>
<div class="a" style="left:1021.8px;top:501.86px;width:16.700000000000045px;height:13.93px;overflow:hidden">
<div class="t" style="left:4.20px;top:3.10px;font-size:8.3px;color:#000;transform:scaleX(0.8740);transform-origin:0 0;">1</div>
</div>
<div class="a" style="left:1039.5px;top:501.86px;width:16.299999999999955px;height:13.93px;overflow:hidden">
<div class="t" style="left:4.20px;top:3.10px;font-size:8.3px;color:#000;transform:scaleX(0.8740);transform-origin:0 0;">84</div>
</div>
<div class="a" style="left:1056.8px;top:501.86px;width:16.100000000000136px;height:13.93px;overflow:hidden">
<div class="t" style="left:4.20px;top:3.10px;font-size:8.3px;color:#000;transform:scaleX(0.8740);transform-origin:0 0;">1...</div>
</div>
<div class="a" style="left:1073.9px;top:501.86px;width:15.799999999999955px;height:13.93px;overflow:hidden">
<div class="t" style="left:4.20px;top:3.10px;font-size:8.3px;color:#000;transform:scaleX(0.8740);transform-origin:0 0;">С...</div>
</div>
<div class="a" style="left:1090.7px;top:501.86px;width:16.799999999999955px;height:13.93px;overflow:hidden">
<div class="t" style="left:4.20px;top:3.10px;font-size:8.3px;color:#000;transform:scaleX(0.8740);transform-origin:0 0;">0...</div>
</div>
<svg class="a" style="left:2.7px;top:515.99px" width="11.5" height="11.5" viewBox="0 0 11.5 11.5"><defs><radialGradient id="g23" cx="50%" cy="55%" r="55%"><stop offset="0" stop-color="#9ef39a"/><stop offset=".7" stop-color="#58dc52"/><stop offset="1" stop-color="#32b030"/></radialGradient></defs><circle cx="5.75" cy="5.75" r="5.45" fill="url(#g23)"/><path d="M4.9 3.0L7.7 5.2L4.9 7.4Z" fill="#3a3040"/></svg>
<div class="t" style="left:14.70px;top:518.89px;font-size:8.3px;color:#000;transform:scaleX(0.8740);transform-origin:0 0;">Аквадистиллятор</div>
<div class="a" style="left:306.3px;top:515.79px;width:113.0px;height:13.93px;overflow:hidden">
<div class="t" style="left:4.20px;top:3.10px;font-size:8.3px;color:#000;transform:scaleX(0.8740);transform-origin:0 0;">121013407223</div>
</div>
<div class="a" style="left:420.3px;top:515.79px;width:15.899999999999977px;height:13.93px;overflow:hidden">
<div class="t" style="left:4.20px;top:3.10px;font-size:8.3px;color:#000;transform:scaleX(0.8740);transform-origin:0 0;">0...</div>
</div>
<div class="t" style="left:525.73px;top:518.89px;font-size:8.3px;color:#000;transform:scaleX(0.8740);transform-origin:0 0;">46 387,33</div>
<div class="t" style="left:566.23px;top:518.89px;font-size:8.3px;color:#000;transform:scaleX(0.8740);transform-origin:0 0;">46 387,33</div>
<div class="a" style="left:601.5px;top:515.79px;width:16.700000000000045px;height:13.93px;overflow:hidden">
<div class="t" style="left:4.20px;top:3.10px;font-size:8.3px;color:#000;transform:scaleX(0.8740);transform-origin:0 0;">0...</div>
</div>
<div class="a" style="left:619.2px;top:515.79px;width:122.0px;height:13.93px;overflow:hidden">
<div class="t" style="left:4.20px;top:3.10px;font-size:8.3px;color:#000;transform:scaleX(0.8740);transform-origin:0 0;">Волкова Лариса Викторовна</div>
</div>
<div class="a" style="left:742.2px;top:515.79px;width:16.399999999999977px;height:13.93px;overflow:hidden">
<div class="t" style="left:4.20px;top:3.10px;font-size:8.3px;color:#000;transform:scaleX(0.8740);transform-origin:0 0;">7</div>
</div>
<div class="a" style="left:759.6px;top:515.79px;width:15.899999999999977px;height:13.93px;overflow:hidden">
<div class="t" style="left:4.20px;top:3.10px;font-size:8.3px;color:#000;transform:scaleX(0.8740);transform-origin:0 0;">1...</div>
</div>
<div class="a" style="left:776.5px;top:515.79px;width:44.89999999999998px;height:13.93px;overflow:hidden">
<div class="t" style="left:4.20px;top:3.10px;font-size:8.3px;color:#000;transform:scaleX(0.8740);transform-origin:0 0;">20.07.2022</div>
</div>
<div class="a" style="left:822.4px;top:515.79px;width:16.0px;height:13.93px;overflow:hidden">
<div class="t" style="left:4.20px;top:3.10px;font-size:8.3px;color:#000;transform:scaleX(0.8740);transform-origin:0 0;">1...</div>
</div>
<div class="a" style="left:1004.9px;top:515.79px;width:15.899999999999977px;height:13.93px;overflow:hidden">
<div class="t" style="left:4.20px;top:3.10px;font-size:8.3px;color:#000;transform:scaleX(0.8740);transform-origin:0 0;">Пол</div>
</div>
<div class="a" style="left:1021.8px;top:515.79px;width:16.700000000000045px;height:13.93px;overflow:hidden">
<div class="t" style="left:4.20px;top:3.10px;font-size:8.3px;color:#000;transform:scaleX(0.8740);transform-origin:0 0;">1</div>
</div>
<div class="a" style="left:1056.8px;top:515.79px;width:16.100000000000136px;height:13.93px;overflow:hidden">
<div class="t" style="left:4.20px;top:3.10px;font-size:8.3px;color:#000;transform:scaleX(0.8740);transform-origin:0 0;">3...</div>
</div>
<div class="a" style="left:1073.9px;top:515.79px;width:15.799999999999955px;height:13.93px;overflow:hidden">
<div class="t" style="left:4.20px;top:3.10px;font-size:8.3px;color:#000;transform:scaleX(0.8740);transform-origin:0 0;">0...</div>
</div>
<div class="a" style="left:1090.7px;top:515.79px;width:16.799999999999955px;height:13.93px;overflow:hidden">
<div class="t" style="left:4.20px;top:3.10px;font-size:8.3px;color:#000;transform:scaleX(0.8740);transform-origin:0 0;">0...</div>
</div>
<svg class="a" style="left:2.7px;top:529.9200000000001px" width="11.5" height="11.5" viewBox="0 0 11.5 11.5"><defs><radialGradient id="g24" cx="50%" cy="55%" r="55%"><stop offset="0" stop-color="#9ef39a"/><stop offset=".7" stop-color="#58dc52"/><stop offset="1" stop-color="#32b030"/></radialGradient></defs><circle cx="5.75" cy="5.75" r="5.45" fill="url(#g24)"/><path d="M4.9 3.0L7.7 5.2L4.9 7.4Z" fill="#3a3040"/></svg>
<div class="t" style="left:14.70px;top:532.82px;font-size:8.3px;color:#000;transform:scaleX(0.8740);transform-origin:0 0;">Аквадистилятор ДЭ-10 2013</div>
<div class="a" style="left:306.3px;top:529.72px;width:113.0px;height:13.93px;overflow:hidden">
<div class="t" style="left:4.20px;top:3.10px;font-size:8.3px;color:#000;transform:scaleX(0.8740);transform-origin:0 0;">121010402100</div>
</div>
<div class="a" style="left:420.3px;top:529.72px;width:15.899999999999977px;height:13.93px;overflow:hidden">
<div class="t" style="left:4.20px;top:3.10px;font-size:8.3px;color:#000;transform:scaleX(0.8740);transform-origin:0 0;">0...</div>
</div>
<div class="t" style="left:525.73px;top:532.82px;font-size:8.3px;color:#000;transform:scaleX(0.8740);transform-origin:0 0;">27 700,00</div>
<div class="t" style="left:566.23px;top:532.82px;font-size:8.3px;color:#000;transform:scaleX(0.8740);transform-origin:0 0;">27 700,00</div>
<div class="a" style="left:601.5px;top:529.72px;width:16.700000000000045px;height:13.93px;overflow:hidden">
<div class="t" style="left:4.20px;top:3.10px;font-size:8.3px;color:#000;transform:scaleX(0.8740);transform-origin:0 0;">0...</div>
</div>
<div class="a" style="left:619.2px;top:529.72px;width:122.0px;height:13.93px;overflow:hidden">
<div class="t" style="left:4.20px;top:3.10px;font-size:8.3px;color:#000;transform:scaleX(0.8740);transform-origin:0 0;">Пермякова Елена Валентиновна</div>
</div>
<div class="a" style="left:742.2px;top:529.72px;width:16.399999999999977px;height:13.93px;overflow:hidden">
<div class="t" style="left:4.20px;top:3.10px;font-size:8.3px;color:#000;transform:scaleX(0.8740);transform-origin:0 0;">2</div>
</div>
<div class="a" style="left:759.6px;top:529.72px;width:15.899999999999977px;height:13.93px;overflow:hidden">
<div class="t" style="left:4.20px;top:3.10px;font-size:8.3px;color:#000;transform:scaleX(0.8740);transform-origin:0 0;">1...</div>
</div>
<div class="a" style="left:776.5px;top:529.72px;width:44.89999999999998px;height:13.93px;overflow:hidden">
<div class="t" style="left:4.20px;top:3.10px;font-size:8.3px;color:#000;transform:scaleX(0.8740);transform-origin:0 0;">01.01.2014</div>
</div>
<div class="a" style="left:822.4px;top:529.72px;width:16.0px;height:13.93px;overflow:hidden">
<div class="t" style="left:4.20px;top:3.10px;font-size:8.3px;color:#000;transform:scaleX(0.8740);transform-origin:0 0;">1...</div>
</div>
<div class="a" style="left:839.4px;top:529.72px;width:164.5px;height:13.93px;overflow:hidden">
<div class="t" style="left:4.20px;top:3.10px;font-size:8.3px;color:#000;transform:scaleX(0.8740);transform-origin:0 0;">54001252000747</div>
</div>
<div class="a" style="left:1004.9px;top:529.72px;width:15.899999999999977px;height:13.93px;overflow:hidden">
<div class="t" style="left:4.20px;top:3.10px;font-size:8.3px;color:#000;transform:scaleX(0.8740);transform-origin:0 0;">Пол</div>
</div>
<div class="a" style="left:1021.8px;top:529.72px;width:16.700000000000045px;height:13.93px;overflow:hidden">
<div class="t" style="left:4.20px;top:3.10px;font-size:8.3px;color:#000;transform:scaleX(0.8740);transform-origin:0 0;">1</div>
</div>
<svg class="a" style="left:2.7px;top:543.85px" width="11.5" height="11.5" viewBox="0 0 11.5 11.5"><defs><radialGradient id="g25" cx="50%" cy="55%" r="55%"><stop offset="0" stop-color="#9ef39a"/><stop offset=".7" stop-color="#58dc52"/><stop offset="1" stop-color="#32b030"/></radialGradient></defs><circle cx="5.75" cy="5.75" r="5.45" fill="url(#g25)"/><path d="M4.9 3.0L7.7 5.2L4.9 7.4Z" fill="#3a3040"/></svg>
<div class="t" style="left:14.70px;top:546.75px;font-size:8.3px;color:#000;transform:scaleX(0.8740);transform-origin:0 0;">Аквадистилятор ДЭ-10М 2015</div>
<div class="a" style="left:306.3px;top:543.65px;width:113.0px;height:13.93px;overflow:hidden">
<div class="t" style="left:4.20px;top:3.10px;font-size:8.3px;color:#000;transform:scaleX(0.8740);transform-origin:0 0;">121010407319</div>
</div>
<div class="a" style="left:420.3px;top:543.65px;width:15.899999999999977px;height:13.93px;overflow:hidden">
<div class="t" style="left:4.20px;top:3.10px;font-size:8.3px;color:#000;transform:scaleX(0.8740);transform-origin:0 0;">0...</div>
</div>
<div class="t" style="left:525.73px;top:546.75px;font-size:8.3px;color:#000;transform:scaleX(0.8740);transform-origin:0 0;">31 301,15</div>
<div class="t" style="left:566.23px;top:546.75px;font-size:8.3px;color:#000;transform:scaleX(0.8740);transform-origin:0 0;">31 301,15</div>
<div class="a" style="left:601.5px;top:543.65px;width:16.700000000000045px;height:13.93px;overflow:hidden">
<div class="t" style="left:4.20px;top:3.10px;font-size:8.3px;color:#000;transform:scaleX(0.8740);transform-origin:0 0;">0...</div>
</div>
<div class="a" style="left:619.2px;top:543.65px;width:122.0px;height:13.93px;overflow:hidden">
<div class="t" style="left:4.20px;top:3.10px;font-size:8.3px;color:#000;transform:scaleX(0.8740);transform-origin:0 0;">Федулова Марина Анатольевна</div>
</div>
<div class="a" style="left:742.2px;top:543.65px;width:16.399999999999977px;height:13.93px;overflow:hidden">
<div class="t" style="left:4.20px;top:3.10px;font-size:8.3px;color:#000;transform:scaleX(0.8740);transform-origin:0 0;">7</div>
</div>
<div class="a" style="left:759.6px;top:543.65px;width:15.899999999999977px;height:13.93px;overflow:hidden">
<div class="t" style="left:4.20px;top:3.10px;font-size:8.3px;color:#000;transform:scaleX(0.8740);transform-origin:0 0;">1...</div>
</div>
<div class="a" style="left:776.5px;top:543.65px;width:44.89999999999998px;height:13.93px;overflow:hidden">
<div class="t" style="left:4.20px;top:3.10px;font-size:8.3px;color:#000;transform:scaleX(0.8740);transform-origin:0 0;">23.06.2015</div>
</div>
<div class="a" style="left:822.4px;top:543.65px;width:16.0px;height:13.93px;overflow:hidden">
<div class="t" style="left:4.20px;top:3.10px;font-size:8.3px;color:#000;transform:scaleX(0.8740);transform-origin:0 0;">1...</div>
</div>
<div class="a" style="left:839.4px;top:543.65px;width:164.5px;height:13.93px;overflow:hidden">
<div class="t" style="left:4.20px;top:3.10px;font-size:8.3px;color:#000;transform:scaleX(0.8740);transform-origin:0 0;">54001252000834</div>
</div>
<div class="a" style="left:1004.9px;top:543.65px;width:15.899999999999977px;height:13.93px;overflow:hidden">
<div class="t" style="left:4.20px;top:3.10px;font-size:8.3px;color:#000;transform:scaleX(0.8740);transform-origin:0 0;">К...</div>
</div>
<svg class="a" style="left:2.7px;top:557.7800000000001px" width="11.5" height="11.5" viewBox="0 0 11.5 11.5"><defs><radialGradient id="g26" cx="50%" cy="55%" r="55%"><stop offset="0" stop-color="#9ef39a"/><stop offset=".7" stop-color="#58dc52"/><stop offset="1" stop-color="#32b030"/></radialGradient></defs><circle cx="5.75" cy="5.75" r="5.45" fill="url(#g26)"/><path d="M4.9 3.0L7.7 5.2L4.9 7.4Z" fill="#3a3040"/></svg>
<div class="t" style="left:14.70px;top:560.68px;font-size:8.3px;color:#000;transform:scaleX(0.8740);transform-origin:0 0;">Аквадистилятор ДЭ-10М 2015</div>
<div class="a" style="left:306.3px;top:557.58px;width:113.0px;height:13.93px;overflow:hidden">
<div class="t" style="left:4.20px;top:3.10px;font-size:8.3px;color:#000;transform:scaleX(0.8740);transform-origin:0 0;">121010407318</div>
</div>
<div class="a" style="left:420.3px;top:557.58px;width:15.899999999999977px;height:13.93px;overflow:hidden">
<div class="t" style="left:4.20px;top:3.10px;font-size:8.3px;color:#000;transform:scaleX(0.8740);transform-origin:0 0;">0...</div>
</div>
<div class="t" style="left:525.73px;top:560.68px;font-size:8.3px;color:#000;transform:scaleX(0.8740);transform-origin:0 0;">31 301,15</div>
<div class="t" style="left:566.23px;top:560.68px;font-size:8.3px;color:#000;transform:scaleX(0.8740);transform-origin:0 0;">31 301,15</div>
<div class="a" style="left:601.5px;top:557.58px;width:16.700000000000045px;height:13.93px;overflow:hidden">
<div class="t" style="left:4.20px;top:3.10px;font-size:8.3px;color:#000;transform:scaleX(0.8740);transform-origin:0 0;">0...</div>
</div>
<div class="a" style="left:619.2px;top:557.58px;width:122.0px;height:13.93px;overflow:hidden">
<div class="t" style="left:4.20px;top:3.10px;font-size:8.3px;color:#000;transform:scaleX(0.8740);transform-origin:0 0;">Федулова Марина Анатольевна</div>
</div>
<div class="a" style="left:742.2px;top:557.58px;width:16.399999999999977px;height:13.93px;overflow:hidden">
<div class="t" style="left:4.20px;top:3.10px;font-size:8.3px;color:#000;transform:scaleX(0.8740);transform-origin:0 0;">7</div>
</div>
<div class="a" style="left:759.6px;top:557.58px;width:15.899999999999977px;height:13.93px;overflow:hidden">
<div class="t" style="left:4.20px;top:3.10px;font-size:8.3px;color:#000;transform:scaleX(0.8740);transform-origin:0 0;">1...</div>
</div>
<div class="a" style="left:776.5px;top:557.58px;width:44.89999999999998px;height:13.93px;overflow:hidden">
<div class="t" style="left:4.20px;top:3.10px;font-size:8.3px;color:#000;transform:scaleX(0.8740);transform-origin:0 0;">23.06.2015</div>
</div>
<div class="a" style="left:822.4px;top:557.58px;width:16.0px;height:13.93px;overflow:hidden">
<div class="t" style="left:4.20px;top:3.10px;font-size:8.3px;color:#000;transform:scaleX(0.8740);transform-origin:0 0;">1...</div>
</div>
<div class="a" style="left:839.4px;top:557.58px;width:164.5px;height:13.93px;overflow:hidden">
<div class="t" style="left:4.20px;top:3.10px;font-size:8.3px;color:#000;transform:scaleX(0.8740);transform-origin:0 0;">54001252000834</div>
</div>
<div class="a" style="left:1004.9px;top:557.58px;width:15.899999999999977px;height:13.93px;overflow:hidden">
<div class="t" style="left:4.20px;top:3.10px;font-size:8.3px;color:#000;transform:scaleX(0.8740);transform-origin:0 0;">К...</div>
</div>
<svg class="a" style="left:2.7px;top:571.71px" width="11.5" height="11.5" viewBox="0 0 11.5 11.5"><defs><radialGradient id="g27" cx="50%" cy="55%" r="55%"><stop offset="0" stop-color="#9ef39a"/><stop offset=".7" stop-color="#58dc52"/><stop offset="1" stop-color="#32b030"/></radialGradient></defs><circle cx="5.75" cy="5.75" r="5.45" fill="url(#g27)"/><path d="M4.9 3.0L7.7 5.2L4.9 7.4Z" fill="#3a3040"/></svg>
<div class="t" style="left:14.70px;top:574.61px;font-size:8.3px;color:#000;transform:scaleX(0.8740);transform-origin:0 0;">Аквадистилятор ДЭ-10М 2015</div>
<div class="a" style="left:306.3px;top:571.51px;width:113.0px;height:13.93px;overflow:hidden">
<div class="t" style="left:4.20px;top:3.10px;font-size:8.3px;color:#000;transform:scaleX(0.8740);transform-origin:0 0;">121010407321</div>
</div>
<div class="a" style="left:420.3px;top:571.51px;width:15.899999999999977px;height:13.93px;overflow:hidden">
<div class="t" style="left:4.20px;top:3.10px;font-size:8.3px;color:#000;transform:scaleX(0.8740);transform-origin:0 0;">0...</div>
</div>
<div class="t" style="left:525.73px;top:574.61px;font-size:8.3px;color:#000;transform:scaleX(0.8740);transform-origin:0 0;">31 301,16</div>
<div class="t" style="left:566.23px;top:574.61px;font-size:8.3px;color:#000;transform:scaleX(0.8740);transform-origin:0 0;">31 301,16</div>
<div class="a" style="left:601.5px;top:571.51px;width:16.700000000000045px;height:13.93px;overflow:hidden">
<div class="t" style="left:4.20px;top:3.10px;font-size:8.3px;color:#000;transform:scaleX(0.8740);transform-origin:0 0;">0...</div>
</div>
<div class="a" style="left:619.2px;top:571.51px;width:122.0px;height:13.93px;overflow:hidden">
<div class="t" style="left:4.20px;top:3.10px;font-size:8.3px;color:#000;transform:scaleX(0.8740);transform-origin:0 0;">Пермякова Елена Валентиновна</div>
</div>
<div class="a" style="left:742.2px;top:571.51px;width:16.399999999999977px;height:13.93px;overflow:hidden">
<div class="t" style="left:4.20px;top:3.10px;font-size:8.3px;color:#000;transform:scaleX(0.8740);transform-origin:0 0;">7</div>
</div>
<div class="a" style="left:759.6px;top:571.51px;width:15.899999999999977px;height:13.93px;overflow:hidden">
<div class="t" style="left:4.20px;top:3.10px;font-size:8.3px;color:#000;transform:scaleX(0.8740);transform-origin:0 0;">1...</div>
</div>
<div class="a" style="left:776.5px;top:571.51px;width:44.89999999999998px;height:13.93px;overflow:hidden">
<div class="t" style="left:4.20px;top:3.10px;font-size:8.3px;color:#000;transform:scaleX(0.8740);transform-origin:0 0;">23.06.2015</div>
</div>
<div class="a" style="left:822.4px;top:571.51px;width:16.0px;height:13.93px;overflow:hidden">
<div class="t" style="left:4.20px;top:3.10px;font-size:8.3px;color:#000;transform:scaleX(0.8740);transform-origin:0 0;">1...</div>
</div>
<div class="a" style="left:839.4px;top:571.51px;width:164.5px;height:13.93px;overflow:hidden">
<div class="t" style="left:4.20px;top:3.10px;font-size:8.3px;color:#000;transform:scaleX(0.8740);transform-origin:0 0;">54001252000834</div>
</div>
<div class="a" style="left:1004.9px;top:571.51px;width:15.899999999999977px;height:13.93px;overflow:hidden">
<div class="t" style="left:4.20px;top:3.10px;font-size:8.3px;color:#000;transform:scaleX(0.8740);transform-origin:0 0;">Пол</div>
</div>
<div class="a" style="left:1143.8px;top:195.4px;width:13.5px;height:390.03999999999996px;background:#fff"></div>
<div class="a" style="left:1146.2px;top:195.4px;width:11.099999999999909px;height:390.03999999999996px;background:#f0f0f0"></div>
<svg class="a" style="left:1148.6px;top:198px" width="6" height="4.5" viewBox="0 0 6 4.5"><path d="M0.6 3.8L3 1.2L5.4 3.8" stroke="#505050" stroke-width="1.3" fill="none"/></svg>
<div class="a" style="left:1146.2px;top:205.8px;width:11.099999999999909px;height:9.9px;background:#c6c6c6"></div>
<div class="a" style="left:1.2px;top:585.2px;width:1156.1px;height:17.2px;background:linear-gradient(#fff 0px,#fff 1.6px,#f0f0f2 3.2px)"></div>
<div class="t" style="left:502.50px;top:591.05px;font-size:7.9px;color:#000;font-weight:bold;transform:scaleX(1.0563);transform-origin:0 0;">572 801 098,76</div>
<div class="t" style="left:567.40px;top:591.05px;font-size:7.9px;color:#000;font-weight:bold;transform:scaleX(1.0603);transform-origin:0 0;">481 23...</div>
<div class="t" style="left:607.30px;top:591.05px;font-size:7.9px;color:#000;font-weight:bold;transform:scaleX(1.0698);transform-origin:0 0;">91</div>
<svg class="a" style="left:193.7px;top:425.6px" width="9" height="13" viewBox="0 0 9 13"><path d="M0.6 0.6V10.9L3 8.7L4.8 12.3L6.4 11.5L4.7 8.1H8Z" fill="#fff" stroke="#000" stroke-width="1" stroke-linejoin="round"/></svg>
<div class="a" style="left:1px;top:602.3px;width:1178px;height:30.7px;background:#1570b0"></div>
<div class="a" style="left:1px;top:602.3px;width:1178px;height:3.5px;background:#3a95d5"></div>
<div class="a" style="left:1px;top:605.8px;width:1178px;height:2.1px;background:#0a5a90"></div>
<div class="a" style="left:1px;top:607.9px;width:1178px;height:23px;background:linear-gradient(#1a6ea8,#1272b2 20%,#1170b0)"></div>
<div class="a" style="left:1px;top:630.8px;width:1178px;height:2.2px;background:#e9ebef"></div>
<div class="a" style="left:2.6px;top:611.4px;width:44.9px;height:19.4px;background:linear-gradient(#9ccbe8 0%,#5aa6d8 8%,#3a8ac6 30%,#1b6aa6 60%,#0f5a92 100%);border-radius:2px 2px 0 0"></div>
<div class="t" style="left:10.80px;top:615.00px;font-size:12px;color:#fff;font-weight:bold;transform:scaleX(0.9972);transform-origin:0 0;">Пуск</div>
<div class="a" style="left:50px;top:611.4px;width:112px;height:19.4px;background:linear-gradient(#ffffff,#f0f0f0 60%,#e4e4e4);border-radius:2px 2px 0 0;box-shadow:inset 0 0 0 1px #b0c4d4"></div>
<svg class="a" style="left:53px;top:617.2px" width="10" height="9" viewBox="0 0 10 9"><rect x="0.6" y="0.6" width="8.8" height="7.8" rx="1" fill="#e0e4e8" stroke="#6a98d0" stroke-width="1.1"/><rect x="1.2" y="1.5" width="2.5" height="6" fill="#f4f8fc"/></svg>
<div class="t" style="left:66.00px;top:618.05px;font-size:7.3px;color:#333;transform:scaleX(1.0042);transform-origin:0 0;">Договоры материальной ...</div>
<div class="a" style="left:165px;top:611.4px;width:67px;height:19.4px;background:linear-gradient(#f0f9fe,#d4eefb 60%,#c8e8f8);border-radius:2px 2px 0 0;box-shadow:inset 0 0 0 1px #b0c4d4"></div>
<svg class="a" style="left:168px;top:616px" width="11" height="11" viewBox="0 0 11 11"><rect x="1.5" y="1" width="8" height="9.5" rx="2.5" fill="#dde5ec" stroke="#7a8a98" stroke-width=".7"/><path d="M2 6A2.5 2.5 0 0 0 4 10.5" stroke="#333" stroke-width="1.5" fill="none"/><rect x="4.5" y="2.5" width="3.5" height="3" fill="#5aa0e0"/><circle cx="8" cy="8.5" r="1.6" fill="#e08a3a"/><rect x="3" y="0.5" width="3" height="1.5" fill="#e04040"/></svg>
<div class="t" style="left:181.00px;top:618.05px;font-size:7.3px;color:#1a5a9a;transform:scaleX(1.0195);transform-origin:0 0;">Картотека ОС</div>
<div class="a" style="left:234px;top:611.4px;width:114px;height:19.4px;background:linear-gradient(#ffffff,#f0f0f0 60%,#e4e4e4);border-radius:2px 2px 0 0;box-shadow:inset 0 0 0 1px #b0c4d4"></div>
<div class="t" style="left:237.00px;top:618.05px;font-size:7.3px;color:#333;transform:scaleX(1.0073);transform-origin:0 0;">Конфигурируемая оборотная ...</div>
<div class="a" style="left:350.4px;top:611.4px;width:114.6px;height:19.4px;background:linear-gradient(#ffffff,#f0f0f0 60%,#e4e4e4);border-radius:2px 2px 0 0;box-shadow:inset 0 0 0 1px #b0c4d4"></div>
<div class="t" style="left:354.00px;top:618.05px;font-size:7.3px;color:#333;transform:scaleX(1.0036);transform-origin:0 0;">Конфигурируемая оборотная ...</div>
<div class="a" style="left:467.6px;top:611.4px;width:110.4px;height:19.4px;background:linear-gradient(#ffffff,#f0f0f0 60%,#e4e4e4);border-radius:2px 2px 0 0;box-shadow:inset 0 0 0 1px #b0c4d4"></div>
<div class="t" style="left:484.00px;top:618.05px;font-size:7.3px;color:#333;transform:scaleX(1.0089);transform-origin:0 0;">Безвозмездное поступле...</div>
<div class="a" style="left:581px;top:611.4px;width:112.6px;height:19.4px;background:linear-gradient(#e6eaee,#d2d9df);border-radius:2px 2px 0 0;box-shadow:inset 0 0 0 1px #b0c4d4"></div>
<svg class="a" style="left:584px;top:616px" width="12" height="11" viewBox="0 0 12 11"><g opacity=".55"><rect x="1" y="1" width="8" height="7" fill="#c8e0f4" stroke="#7aa0c8" stroke-width=".7"/><path d="M1 8L4 10.5L8 8.5" fill="#e0b080" stroke="#b08050" stroke-width=".6"/><path d="M10 0.5V4.5M8.8 3.3L10 4.8L11.2 3.3" stroke="#30b030" stroke-width="1"/></g></svg>
<div class="t" style="left:597.60px;top:618.05px;font-size:7.3px;color:#8a98a8;transform:scaleX(1.0030);transform-origin:0 0;">Товарные накладные вхо...</div>
<div class="a" style="left:695.6px;top:611.4px;width:112.4px;height:19.4px;background:linear-gradient(#ffffff,#f0f0f0 60%,#e4e4e4);border-radius:2px 2px 0 0;box-shadow:inset 0 0 0 1px #b0c4d4"></div>
<svg class="a" style="left:698.6px;top:616px" width="12" height="11" viewBox="0 0 12 11"><g opacity="1"><rect x="1" y="1" width="8" height="7" fill="#c8e0f4" stroke="#7aa0c8" stroke-width=".7"/><path d="M1 8L4 10.5L8 8.5" fill="#e0b080" stroke="#b08050" stroke-width=".6"/><path d="M10 0.5V4.5M8.8 3.3L10 4.8L11.2 3.3" stroke="#30b030" stroke-width="1"/></g></svg>
<div class="t" style="left:712.00px;top:618.05px;font-size:7.3px;color:#333;transform:scaleX(1.0160);transform-origin:0 0;">Товарные накладные вхо...</div>
<div class="a" style="left:867.6px;top:610.6px;width:10.4px;height:10.4px;background:#1a5888"></div>
<svg class="a" style="left:869.8px;top:613.5px" width="6" height="4" viewBox="0 0 6 4"><path d="M0.5 3.5L3 1L5.5 3.5" stroke="#8ab8e0" stroke-width="1" fill="none"/></svg>
<div class="a" style="left:867.6px;top:622.6px;width:10.4px;height:10.4px;background:#1a5888"></div>
<svg class="a" style="left:869.8px;top:626px" width="6" height="4" viewBox="0 0 6 4"><path d="M0.5 0.5L3 3L5.5 0.5" stroke="#8ab8e0" stroke-width="1" fill="none"/></svg>
<div class="t" style="left:958.30px;top:606.85px;font-size:7.3px;color:#fff;transform:scaleX(0.9386);transform-origin:0 0;">Лицензия номер: 116</div>
<div class="a" style="left:1023.8px;top:616.4px;width:1.2px;height:4.2px;background:#fff"></div>
<div class="t" style="left:1022.60px;top:591.45px;font-size:7.3px;color:#000;">3</div>
<div class="a" style="left:1025.5px;top:534.1px;width:153.4px;height:98.9px;background:#fff;box-shadow:inset 1px 0 0 #e03a3a, inset -1px 0 0 #e03a3a, inset 0 1px 0 #e03a3a"></div>
<div class="a" style="left:1026.5px;top:535.1px;width:151.4px;height:33.6px;background:#7b7b7b"></div>
<svg class="a" style="left:1031.5px;top:541px" width="20" height="19" viewBox="0 0 20 19"><defs><linearGradient id="am" x1="0" y1="0" x2="0" y2="1"><stop offset="0" stop-color="#f04848"/><stop offset="1" stop-color="#a01010"/></linearGradient></defs><path d="M1 18L5 3C6 0.8 12 0.3 15 2L19 18H14L13 14H8L7 18Z" fill="url(#am)" stroke="#d8d8d8" stroke-width=".6"/><path d="M6 8H10V5.5L15.5 10L10 14.5V12H6Z" fill="#fff"/></svg>
<div class="t" style="left:1062.30px;top:548.00px;font-size:12.4px;color:#fff;transform:scaleX(1.1106);transform-origin:0 0;">Ammyy Admin</div>
<div class="t" style="left:1037.60px;top:578.70px;font-size:8px;color:#222;transform:scaleX(1.0364);transform-origin:0 0;">Session List</div>
<div class="t" style="left:1031.70px;top:591.90px;font-size:8px;color:#222;transform:scaleX(0.9510);transform-origin:0 0;">ID=93617871</div>
<div class="a" style="left:1026.5px;top:618.3px;width:151.4px;height:14.7px;background:#7b7b7b"></div>
<div class="t" style="left:1031.80px;top:621.80px;font-size:8px;color:#fff;transform:scaleX(0.8917);transform-origin:0 0;">&gt;&gt;&gt;</div>
<div class="t" style="left:1108.70px;top:621.80px;font-size:8px;color:#fff;transform:scaleX(1.0271);transform-origin:0 0;text-decoration:underline">www.ammyy.com</div>
<div class="a" style="left:0px;top:0px;width:1px;height:633px;background:#000"></div>
<div class="a" style="left:1179px;top:0px;width:23px;height:633px;background:#000"></div>
</body></html>
